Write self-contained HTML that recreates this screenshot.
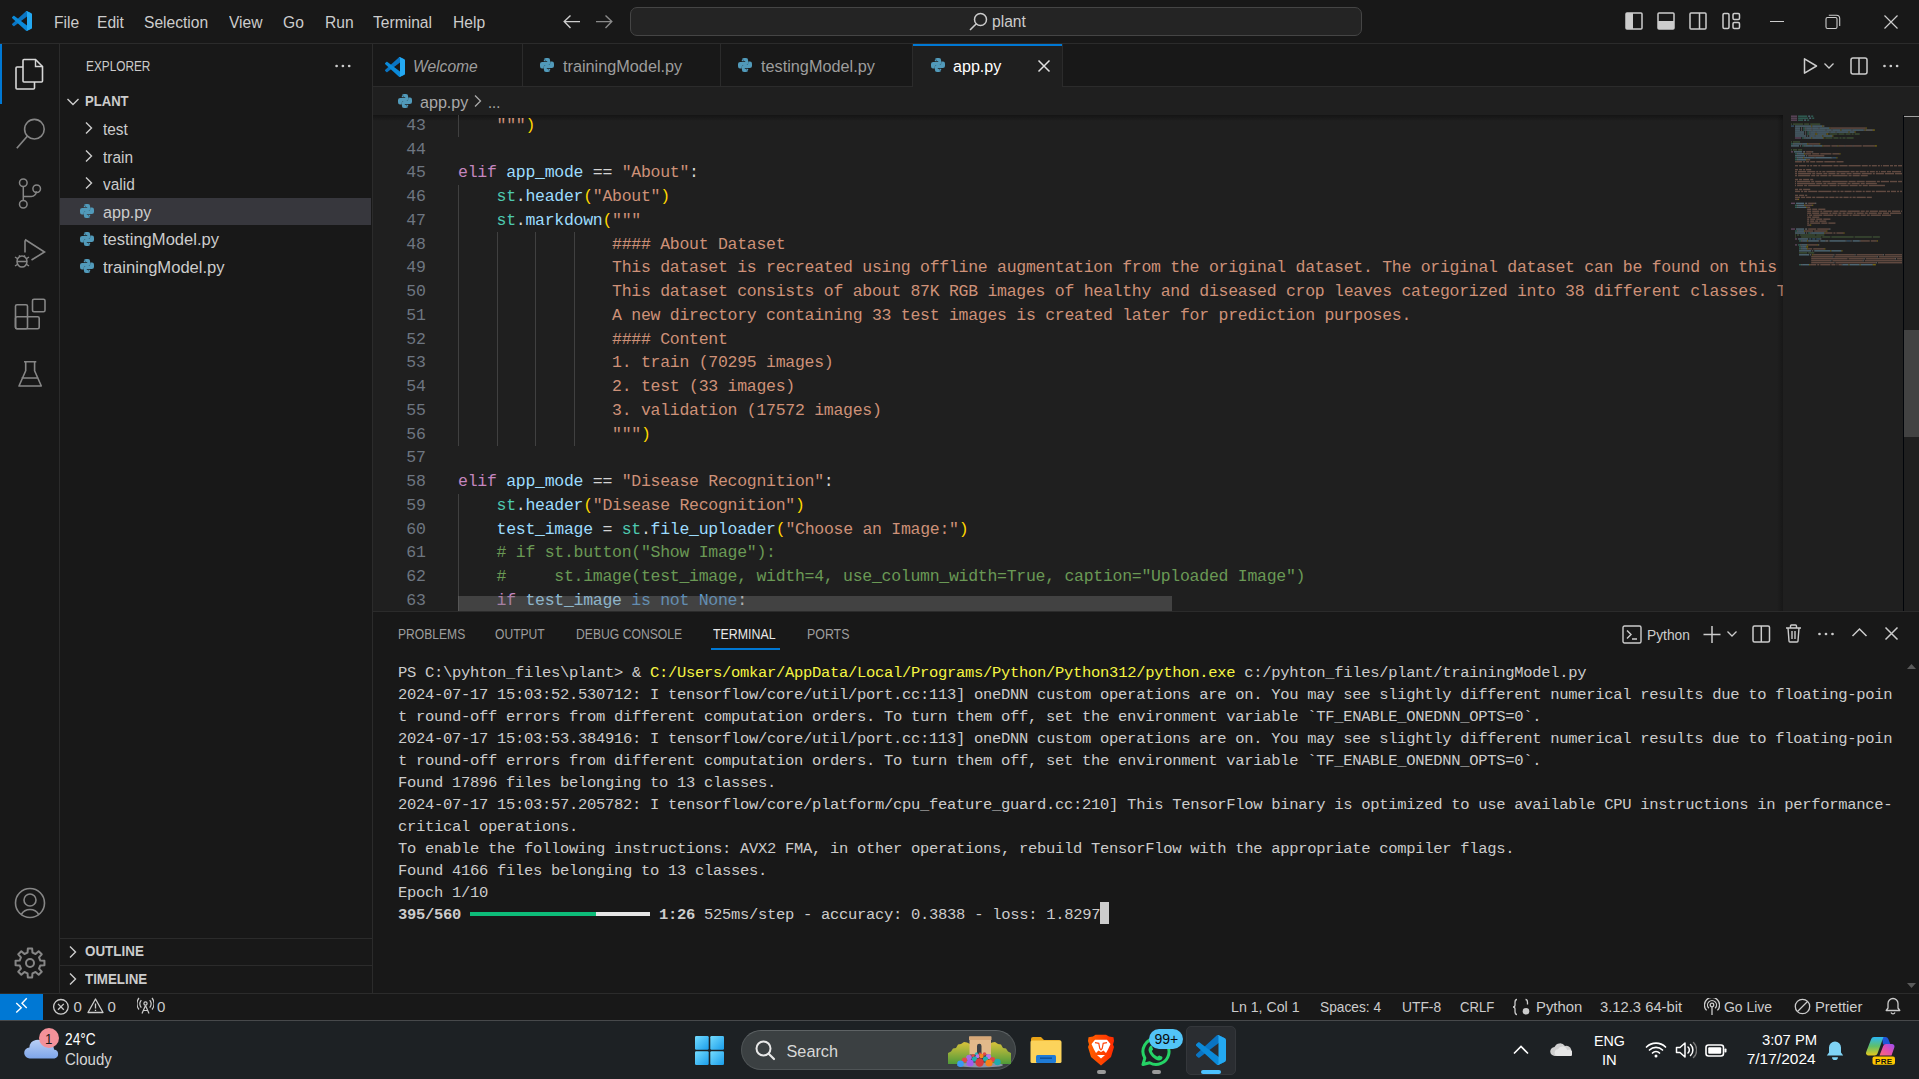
<!DOCTYPE html>
<html><head><meta charset="utf-8"><style>
html,body{margin:0;padding:0;width:1919px;height:1079px;overflow:hidden;background:#1f1f1f;}
.t{position:absolute;white-space:pre;line-height:normal;}
.r{position:absolute;display:block;}
</style></head><body>
<div class="r" style="left:0px;top:0px;width:1919px;height:43px;background:#181818;"></div><div class="r" style="left:0px;top:43px;width:1919px;height:1px;background:#2b2b2b;"></div><div class="r" style="left:0px;top:44px;width:59px;height:949px;background:#181818;"></div><div class="r" style="left:59px;top:44px;width:1px;height:949px;background:#2b2b2b;"></div><div class="r" style="left:60px;top:44px;width:312px;height:949px;background:#181818;"></div><div class="r" style="left:372px;top:44px;width:1px;height:949px;background:#2b2b2b;"></div><div class="r" style="left:373px;top:44px;width:1546px;height:43px;background:#181818;"></div><div class="r" style="left:373px;top:86px;width:1546px;height:1px;background:#2b2b2b;"></div><div class="r" style="left:373px;top:87px;width:1546px;height:524px;background:#1f1f1f;"></div><div class="r" style="left:373px;top:611px;width:1546px;height:382px;background:#181818;"></div><div class="r" style="left:373px;top:611px;width:1546px;height:1px;background:#2b2b2b;"></div><div class="r" style="left:0px;top:993px;width:1919px;height:27px;background:#181818;"></div><div class="r" style="left:0px;top:993px;width:1919px;height:1px;background:#2b2b2b;"></div><div class="r" style="left:0px;top:1020px;width:1919px;height:59px;background:#1d2124;"></div><svg class="r" style="left:12px;top:11px;" width="20" height="20" viewBox="0 0 100 100"><path fill="#0a74c2" d="M96.4614 10.7962L75.8569 0.875542C73.4719 -0.272773 70.6217 0.211611 68.75 2.08333L1.29858 63.5832C-0.515693 65.2373 -0.513607 68.0937 1.30308 69.7452L6.81272 74.754C8.29793 76.1042 10.5347 76.2036 12.1338 74.9905L93.3609 13.3699C96.0859 11.3026 100 13.2462 100 16.6667V16.4275C100 14.0265 98.6246 11.8378 96.4614 10.7962Z"/><path fill="#0b8ad9" d="M96.4614 89.2038L75.8569 99.1245C73.4719 100.273 70.6217 99.7884 68.75 97.9167L1.29858 36.4169C-0.515693 34.7627 -0.513607 31.9063 1.30308 30.2548L6.81272 25.246C8.29793 23.8958 10.5347 23.7964 12.1338 25.0095L93.3609 86.6301C96.0859 88.6974 100 86.7538 100 83.3334V83.5726C100 85.9735 98.6246 88.1622 96.4614 89.2038Z"/><path fill="#24a9f2" d="M75.8578 99.1263C73.4721 100.274 70.6219 99.7885 68.75 97.9166C71.0564 100.223 75 98.5895 75 95.3278V4.67213C75 1.41039 71.0564 -0.223106 68.75 2.08329C70.6219 0.211402 73.4721 -0.273666 75.8578 0.873633L96.4587 10.7807C98.6234 11.8217 100 14.0112 100 16.4132V83.5871C100 85.9891 98.6234 88.1786 96.4586 89.2196L75.8578 99.1263Z"/></svg><div class="t" style="left:53.60px;top:13.05px;font-size:16.25px;color:#cccccc;font-family:'Liberation Sans', sans-serif;transform:scaleX(0.96);transform-origin:0 0;">File</div><div class="t" style="left:97.00px;top:13.05px;font-size:16.25px;color:#cccccc;font-family:'Liberation Sans', sans-serif;transform:scaleX(0.96);transform-origin:0 0;">Edit</div><div class="t" style="left:144.30px;top:13.05px;font-size:16.25px;color:#cccccc;font-family:'Liberation Sans', sans-serif;transform:scaleX(0.96);transform-origin:0 0;">Selection</div><div class="t" style="left:229.40px;top:13.05px;font-size:16.25px;color:#cccccc;font-family:'Liberation Sans', sans-serif;transform:scaleX(0.96);transform-origin:0 0;">View</div><div class="t" style="left:283.30px;top:13.05px;font-size:16.25px;color:#cccccc;font-family:'Liberation Sans', sans-serif;transform:scaleX(0.96);transform-origin:0 0;">Go</div><div class="t" style="left:324.50px;top:13.05px;font-size:16.25px;color:#cccccc;font-family:'Liberation Sans', sans-serif;transform:scaleX(0.96);transform-origin:0 0;">Run</div><div class="t" style="left:373.20px;top:13.05px;font-size:16.25px;color:#cccccc;font-family:'Liberation Sans', sans-serif;transform:scaleX(0.96);transform-origin:0 0;">Terminal</div><div class="t" style="left:453.00px;top:13.05px;font-size:16.25px;color:#cccccc;font-family:'Liberation Sans', sans-serif;transform:scaleX(0.96);transform-origin:0 0;">Help</div><svg class="r" style="left:560px;top:12px;" width="24" height="20" viewBox="0 0 24 20"><path d="M4.5 9.6H20M10.5 3.5 4.2 9.6l6.3 6.3" stroke="#cccccc" stroke-width="1.4" fill="none"/></svg><svg class="r" style="left:592px;top:12px;" width="24" height="20" viewBox="0 0 24 20"><path d="M4 9.6h15.5M13.5 3.5l6.3 6.1-6.3 6.3" stroke="#8a8a8a" stroke-width="1.4" fill="none"/></svg><div class="r" style="left:630px;top:7px;width:732px;height:29px;background:#242424;box-sizing:border-box;border:1px solid #454545;border-radius:7px;"></div><svg class="r" style="left:966px;top:11px;" width="24" height="22" viewBox="0 0 24 22"><circle cx="14.5" cy="8.5" r="6" stroke="#cccccc" stroke-width="1.5" fill="none"/><path d="M10.3 12.7 4 19" stroke="#cccccc" stroke-width="1.6" fill="none"/></svg><div class="t" style="left:992.00px;top:12.35px;font-size:16.25px;color:#cccccc;font-family:'Liberation Sans', sans-serif;transform:scaleX(0.96);transform-origin:0 0;">plant</div><svg class="r" style="left:1625px;top:12px;" width="18" height="18" viewBox="0 0 18 18"><rect x="1" y="1" width="16" height="16" rx="1" stroke="#cccccc" stroke-width="1.5" fill="none"/><rect x="1" y="1" width="7" height="16" fill="#cccccc"/></svg><svg class="r" style="left:1657px;top:12px;" width="18" height="18" viewBox="0 0 18 18"><rect x="1" y="1" width="16" height="16" rx="1" stroke="#cccccc" stroke-width="1.5" fill="none"/><rect x="1" y="9" width="16" height="8" fill="#cccccc"/></svg><svg class="r" style="left:1689px;top:12px;" width="18" height="18" viewBox="0 0 18 18"><rect x="1" y="1" width="16" height="16" rx="1" stroke="#cccccc" stroke-width="1.5" fill="none"/><path d="M10.5 1v16" stroke="#cccccc" stroke-width="1.5"/></svg><svg class="r" style="left:1722px;top:12px;" width="19" height="18" viewBox="0 0 19 18"><rect x="1" y="1.5" width="6" height="15" rx="1.2" stroke="#cccccc" stroke-width="1.5" fill="none"/><rect x="11" y="1.5" width="6.5" height="6" rx="1.2" stroke="#cccccc" stroke-width="1.5" fill="none"/><rect x="11" y="10.5" width="6.5" height="6" rx="1.2" stroke="#cccccc" stroke-width="1.5" fill="none"/></svg><div class="r" style="left:1770px;top:21px;width:14px;height:1px;background:#cccccc;"></div><svg class="r" style="left:1825px;top:14px;" width="16" height="16" viewBox="0 0 16 16"><rect x="1" y="3.5" width="11" height="11" rx="1.5" stroke="#cccccc" stroke-width="1.1" fill="none"/><path d="M3.8 1.2h7.6a3.3 3.3 0 0 1 3.3 3.3v7.6" stroke="#cccccc" stroke-width="1.1" fill="none"/></svg><svg class="r" style="left:1883px;top:14px;" width="16" height="16" viewBox="0 0 16 16"><path d="M1.5 1.5l13 13M14.5 1.5l-13 13" stroke="#cccccc" stroke-width="1.2"/></svg><div class="r" style="left:0px;top:44px;width:2px;height:60px;background:#0078d4;"></div><svg class="r" style="left:0px;top:44px;" width="60" height="60" viewBox="0 0 60 60"><path d="M24 59.5h11.5l7 7v14.5a1 1 0 0 1-1 1H24a1 1 0 0 1-1-1v-20.5a1 1 0 0 1 1-1z" transform="translate(0,-44)" stroke="#d7d7d7" stroke-width="1.6" fill="none"/><path d="M35.5 59.5v7h7" transform="translate(0,-44)" stroke="#d7d7d7" stroke-width="1.4" fill="none"/><path d="M23 67H17a1 1 0 0 0-1 1v20a1 1 0 0 0 1 1h16.5a1 1 0 0 0 1-1v-6" transform="translate(0,-44)" stroke="#d7d7d7" stroke-width="1.6" fill="none"/></svg><svg class="r" style="left:0px;top:104px;" width="60" height="60" viewBox="0 0 60 60"><circle cx="34.4" cy="25.2" r="9.8" stroke="#868686" stroke-width="1.6" fill="none"/><path d="M27.3 32.3 16.8 44.2" stroke="#868686" stroke-width="1.7" fill="none"/></svg><svg class="r" style="left:0px;top:164px;" width="60" height="60" viewBox="0 0 60 60"><circle cx="23.3" cy="18.8" r="3.8" stroke="#868686" stroke-width="1.5" fill="none"/><circle cx="23.3" cy="40.2" r="3.8" stroke="#868686" stroke-width="1.5" fill="none"/><circle cx="36.7" cy="24.8" r="3.8" stroke="#868686" stroke-width="1.5" fill="none"/><path d="M23.3 22.6v13.8M23.3 32.5h8a5 5 0 0 0 5-5v-0.2" stroke="#868686" stroke-width="1.5" fill="none"/></svg><svg class="r" style="left:0px;top:224px;" width="60" height="60" viewBox="0 0 60 60"><path d="M25 16.5v12M25 15.5l19.5 12.5-13 8" stroke="#868686" stroke-width="1.6" fill="none" stroke-linejoin="miter"/><ellipse cx="22" cy="37.5" rx="5" ry="5.5" stroke="#868686" stroke-width="1.5" fill="none"/><path d="M17 37.5h10M15 33l3 2M29 33l-3 2M15 42l3-2M29 42l-3-2M19 31.5l1.5 1.5M25 31.5l-1.5 1.5" stroke="#868686" stroke-width="1.4" fill="none"/></svg><svg class="r" style="left:0px;top:284px;" width="60" height="60" viewBox="0 0 60 60"><rect x="15.5" y="20.7" width="12" height="24" rx="1.5" stroke="#868686" stroke-width="1.6" fill="none"/><rect x="15.5" y="32.7" width="23.7" height="12" rx="1.5" stroke="#868686" stroke-width="1.6" fill="none"/><rect x="32.5" y="15.2" width="12.5" height="12.5" rx="1.5" stroke="#868686" stroke-width="1.6" fill="none"/></svg><svg class="r" style="left:0px;top:344px;" width="60" height="60" viewBox="0 0 60 60"><path d="M24 17.7h12.3M25.7 17.7v9L19 42h22.3l-6.7-15.3v-9M21.5 34h17" stroke="#868686" stroke-width="1.6" fill="none" stroke-linejoin="round"/></svg><svg class="r" style="left:0px;top:873px;" width="60" height="60" viewBox="0 0 60 60"><circle cx="30" cy="30" r="14.5" stroke="#868686" stroke-width="1.6" fill="none"/><circle cx="30" cy="27" r="6" stroke="#868686" stroke-width="1.6" fill="none"/><path d="M21.3 41.5a10 10 0 0 1 17.4 0" stroke="#868686" stroke-width="1.6" fill="none"/></svg><svg class="r" style="left:0px;top:933px;" width="60" height="60" viewBox="0 0 60 60"><path d="M44.44 27.84 L44.44 32.16 L40.31 32.47 L39.04 35.54 L41.74 38.68 L38.68 41.74 L35.54 39.04 L32.47 40.31 L32.16 44.44 L27.84 44.44 L27.53 40.31 L24.46 39.04 L21.32 41.74 L18.26 38.68 L20.96 35.54 L19.69 32.47 L15.56 32.16 L15.56 27.84 L19.69 27.53 L20.96 24.46 L18.26 21.32 L21.32 18.26 L24.46 20.96 L27.53 19.69 L27.84 15.56 L32.16 15.56 L32.47 19.69 L35.54 20.96 L38.68 18.26 L41.74 21.32 L39.04 24.46 L40.31 27.53Z" stroke="#868686" stroke-width="2" fill="none" stroke-linejoin="round"/><circle cx="30" cy="30" r="4" stroke="#868686" stroke-width="2" fill="none"/></svg><div class="t" style="left:85.50px;top:59.35px;font-size:13.75px;color:#cccccc;font-family:'Liberation Sans', sans-serif;transform:scaleX(0.86);transform-origin:0 0;">EXPLORER</div><svg class="r" style="left:330px;top:60px;" width="26" height="12" viewBox="0 0 26 12"><circle cx="6.600000000000023" cy="6" r="1.35" fill="#cccccc"/><circle cx="12.899999999999977" cy="6" r="1.35" fill="#cccccc"/><circle cx="19.19999999999999" cy="6" r="1.35" fill="#cccccc"/></svg><svg class="r" style="left:66px;top:97px;" width="14" height="10" viewBox="0 0 14 10"><path d="M1.5 2 7 7.5 12.5 2" stroke="#cccccc" stroke-width="1.4" fill="none"/></svg><div class="t" style="left:85.00px;top:94.35px;font-size:13.75px;color:#cccccc;font-family:'Liberation Sans', sans-serif;font-weight:700;transform:scaleX(0.95);transform-origin:0 0;">PLANT</div><svg class="r" style="left:84px;top:121.0px;" width="10" height="14" viewBox="0 0 10 14"><path d="M2 1.5 7.5 7 2 12.5" stroke="#cccccc" stroke-width="1.4" fill="none"/></svg><div class="t" style="left:103.00px;top:120.05px;font-size:16.25px;color:#cccccc;font-family:'Liberation Sans', sans-serif;transform:scaleX(0.95);transform-origin:0 0;">test</div><svg class="r" style="left:84px;top:148.5px;" width="10" height="14" viewBox="0 0 10 14"><path d="M2 1.5 7.5 7 2 12.5" stroke="#cccccc" stroke-width="1.4" fill="none"/></svg><div class="t" style="left:103.00px;top:147.55px;font-size:16.25px;color:#cccccc;font-family:'Liberation Sans', sans-serif;transform:scaleX(0.95);transform-origin:0 0;">train</div><svg class="r" style="left:84px;top:176.0px;" width="10" height="14" viewBox="0 0 10 14"><path d="M2 1.5 7.5 7 2 12.5" stroke="#cccccc" stroke-width="1.4" fill="none"/></svg><div class="t" style="left:103.00px;top:175.05px;font-size:16.25px;color:#cccccc;font-family:'Liberation Sans', sans-serif;transform:scaleX(0.95);transform-origin:0 0;">valid</div><div class="r" style="left:60px;top:198px;width:311px;height:27px;background:#37373d;"></div><svg class="r" style="left:80px;top:204.0px;" width="14" height="14" viewBox="0 0 14 14"><path fill="#519aba" d="M3.8 2.2Q3.8 0 6 0H8Q10.1 0 10.1 2.2V5.3Q10.1 7 8.4 7H5.6Q3.8 7 3.8 8.8V10.4H2Q0 10.4 0 8.2V6Q0 3.9 2.2 3.9H7.2V3.3H3.8Z"/><path fill="#519aba" d="M3.8 2.2Q3.8 0 6 0H8Q10.1 0 10.1 2.2V5.3Q10.1 7 8.4 7H5.6Q3.8 7 3.8 8.8V10.4H2Q0 10.4 0 8.2V6Q0 3.9 2.2 3.9H7.2V3.3H3.8Z" transform="rotate(180 7 7)"/><path d="M4.6 1.3 5.6 2.6M9.4 12.7 8.4 11.4" stroke="#1a2530" stroke-width="0.9" opacity="0.7"/></svg><div class="t" style="left:103.00px;top:202.55px;font-size:16.25px;color:#cccccc;font-family:'Liberation Sans', sans-serif;transform:scaleX(0.99);transform-origin:0 0;">app.py</div><svg class="r" style="left:80px;top:231.5px;" width="14" height="14" viewBox="0 0 14 14"><path fill="#519aba" d="M3.8 2.2Q3.8 0 6 0H8Q10.1 0 10.1 2.2V5.3Q10.1 7 8.4 7H5.6Q3.8 7 3.8 8.8V10.4H2Q0 10.4 0 8.2V6Q0 3.9 2.2 3.9H7.2V3.3H3.8Z"/><path fill="#519aba" d="M3.8 2.2Q3.8 0 6 0H8Q10.1 0 10.1 2.2V5.3Q10.1 7 8.4 7H5.6Q3.8 7 3.8 8.8V10.4H2Q0 10.4 0 8.2V6Q0 3.9 2.2 3.9H7.2V3.3H3.8Z" transform="rotate(180 7 7)"/><path d="M4.6 1.3 5.6 2.6M9.4 12.7 8.4 11.4" stroke="#1a2530" stroke-width="0.9" opacity="0.7"/></svg><div class="t" style="left:103.00px;top:230.05px;font-size:16.25px;color:#cccccc;font-family:'Liberation Sans', sans-serif;transform:scaleX(1.02);transform-origin:0 0;">testingModel.py</div><svg class="r" style="left:80px;top:259.0px;" width="14" height="14" viewBox="0 0 14 14"><path fill="#519aba" d="M3.8 2.2Q3.8 0 6 0H8Q10.1 0 10.1 2.2V5.3Q10.1 7 8.4 7H5.6Q3.8 7 3.8 8.8V10.4H2Q0 10.4 0 8.2V6Q0 3.9 2.2 3.9H7.2V3.3H3.8Z"/><path fill="#519aba" d="M3.8 2.2Q3.8 0 6 0H8Q10.1 0 10.1 2.2V5.3Q10.1 7 8.4 7H5.6Q3.8 7 3.8 8.8V10.4H2Q0 10.4 0 8.2V6Q0 3.9 2.2 3.9H7.2V3.3H3.8Z" transform="rotate(180 7 7)"/><path d="M4.6 1.3 5.6 2.6M9.4 12.7 8.4 11.4" stroke="#1a2530" stroke-width="0.9" opacity="0.7"/></svg><div class="t" style="left:103.00px;top:257.55px;font-size:16.25px;color:#cccccc;font-family:'Liberation Sans', sans-serif;transform:scaleX(1.02);transform-origin:0 0;">trainingModel.py</div><div class="r" style="left:60px;top:938px;width:312px;height:1px;background:#2b2b2b;"></div><div class="r" style="left:60px;top:965px;width:312px;height:1px;background:#2b2b2b;"></div><svg class="r" style="left:68px;top:945px;" width="10" height="14" viewBox="0 0 10 14"><path d="M2 1.5 7.5 7 2 12.5" stroke="#cccccc" stroke-width="1.4" fill="none"/></svg><div class="t" style="left:85.00px;top:944.35px;font-size:13.75px;color:#cccccc;font-family:'Liberation Sans', sans-serif;font-weight:700;transform:scaleX(0.975);transform-origin:0 0;">OUTLINE</div><svg class="r" style="left:68px;top:972px;" width="10" height="14" viewBox="0 0 10 14"><path d="M2 1.5 7.5 7 2 12.5" stroke="#cccccc" stroke-width="1.4" fill="none"/></svg><div class="t" style="left:85.00px;top:972.35px;font-size:13.75px;color:#cccccc;font-family:'Liberation Sans', sans-serif;font-weight:700;transform:scaleX(0.97);transform-origin:0 0;">TIMELINE</div><div class="r" style="left:522px;top:44px;width:1px;height:43px;background:#2b2b2b;"></div><div class="r" style="left:720px;top:44px;width:1px;height:43px;background:#2b2b2b;"></div><div class="r" style="left:912px;top:44px;width:1px;height:43px;background:#2b2b2b;"></div><div class="r" style="left:1062px;top:44px;width:1px;height:43px;background:#2b2b2b;"></div><div class="r" style="left:913px;top:44px;width:149px;height:43px;background:#1f1f1f;"></div><div class="r" style="left:913px;top:44px;width:149px;height:1.5px;background:#0078d4;"></div><svg class="r" style="left:385px;top:57px;" width="20" height="20" viewBox="0 0 100 100"><path fill="#0a74c2" d="M96.4614 10.7962L75.8569 0.875542C73.4719 -0.272773 70.6217 0.211611 68.75 2.08333L1.29858 63.5832C-0.515693 65.2373 -0.513607 68.0937 1.30308 69.7452L6.81272 74.754C8.29793 76.1042 10.5347 76.2036 12.1338 74.9905L93.3609 13.3699C96.0859 11.3026 100 13.2462 100 16.6667V16.4275C100 14.0265 98.6246 11.8378 96.4614 10.7962Z"/><path fill="#0b8ad9" d="M96.4614 89.2038L75.8569 99.1245C73.4719 100.273 70.6217 99.7884 68.75 97.9167L1.29858 36.4169C-0.515693 34.7627 -0.513607 31.9063 1.30308 30.2548L6.81272 25.246C8.29793 23.8958 10.5347 23.7964 12.1338 25.0095L93.3609 86.6301C96.0859 88.6974 100 86.7538 100 83.3334V83.5726C100 85.9735 98.6246 88.1622 96.4614 89.2038Z"/><path fill="#24a9f2" d="M75.8578 99.1263C73.4721 100.274 70.6219 99.7885 68.75 97.9166C71.0564 100.223 75 98.5895 75 95.3278V4.67213C75 1.41039 71.0564 -0.223106 68.75 2.08329C70.6219 0.211402 73.4721 -0.273666 75.8578 0.873633L96.4587 10.7807C98.6234 11.8217 100 14.0112 100 16.4132V83.5871C100 85.9891 98.6234 88.1786 96.4586 89.2196L75.8578 99.1263Z"/></svg><div class="t" style="left:413.00px;top:57.05px;font-size:16.25px;color:#9d9d9d;font-family:'Liberation Sans', sans-serif;font-style:italic;transform:scaleX(0.96);transform-origin:0 0;">Welcome</div><svg class="r" style="left:540px;top:58px;" width="14" height="14" viewBox="0 0 14 14"><path fill="#519aba" d="M3.8 2.2Q3.8 0 6 0H8Q10.1 0 10.1 2.2V5.3Q10.1 7 8.4 7H5.6Q3.8 7 3.8 8.8V10.4H2Q0 10.4 0 8.2V6Q0 3.9 2.2 3.9H7.2V3.3H3.8Z"/><path fill="#519aba" d="M3.8 2.2Q3.8 0 6 0H8Q10.1 0 10.1 2.2V5.3Q10.1 7 8.4 7H5.6Q3.8 7 3.8 8.8V10.4H2Q0 10.4 0 8.2V6Q0 3.9 2.2 3.9H7.2V3.3H3.8Z" transform="rotate(180 7 7)"/><path d="M4.6 1.3 5.6 2.6M9.4 12.7 8.4 11.4" stroke="#1a2530" stroke-width="0.9" opacity="0.7"/></svg><div class="t" style="left:563.00px;top:57.05px;font-size:16.25px;color:#9d9d9d;font-family:'Liberation Sans', sans-serif;">trainingModel.py</div><svg class="r" style="left:738px;top:58px;" width="14" height="14" viewBox="0 0 14 14"><path fill="#519aba" d="M3.8 2.2Q3.8 0 6 0H8Q10.1 0 10.1 2.2V5.3Q10.1 7 8.4 7H5.6Q3.8 7 3.8 8.8V10.4H2Q0 10.4 0 8.2V6Q0 3.9 2.2 3.9H7.2V3.3H3.8Z"/><path fill="#519aba" d="M3.8 2.2Q3.8 0 6 0H8Q10.1 0 10.1 2.2V5.3Q10.1 7 8.4 7H5.6Q3.8 7 3.8 8.8V10.4H2Q0 10.4 0 8.2V6Q0 3.9 2.2 3.9H7.2V3.3H3.8Z" transform="rotate(180 7 7)"/><path d="M4.6 1.3 5.6 2.6M9.4 12.7 8.4 11.4" stroke="#1a2530" stroke-width="0.9" opacity="0.7"/></svg><div class="t" style="left:761.00px;top:57.05px;font-size:16.25px;color:#9d9d9d;font-family:'Liberation Sans', sans-serif;">testingModel.py</div><svg class="r" style="left:930.5px;top:58px;" width="14" height="14" viewBox="0 0 14 14"><path fill="#519aba" d="M3.8 2.2Q3.8 0 6 0H8Q10.1 0 10.1 2.2V5.3Q10.1 7 8.4 7H5.6Q3.8 7 3.8 8.8V10.4H2Q0 10.4 0 8.2V6Q0 3.9 2.2 3.9H7.2V3.3H3.8Z"/><path fill="#519aba" d="M3.8 2.2Q3.8 0 6 0H8Q10.1 0 10.1 2.2V5.3Q10.1 7 8.4 7H5.6Q3.8 7 3.8 8.8V10.4H2Q0 10.4 0 8.2V6Q0 3.9 2.2 3.9H7.2V3.3H3.8Z" transform="rotate(180 7 7)"/><path d="M4.6 1.3 5.6 2.6M9.4 12.7 8.4 11.4" stroke="#1a2530" stroke-width="0.9" opacity="0.7"/></svg><div class="t" style="left:953.00px;top:57.05px;font-size:16.25px;color:#ffffff;font-family:'Liberation Sans', sans-serif;transform:scaleX(0.99);transform-origin:0 0;">app.py</div><svg class="r" style="left:1037px;top:59px;" width="14" height="14" viewBox="0 0 14 14"><path d="M1.5 1.5l11 11M12.5 1.5l-11 11" stroke="#e0e0e0" stroke-width="1.5"/></svg><svg class="r" style="left:1801.5px;top:57px;" width="18" height="18" viewBox="0 0 18 18"><path d="M2.5 1.8 14.5 9 2.5 16.2Z" stroke="#cccccc" stroke-width="1.5" fill="none" stroke-linejoin="round"/></svg><svg class="r" style="left:1823px;top:62px;" width="12" height="8" viewBox="0 0 12 8"><path d="M1.5 1.5 6 6 10.5 1.5" stroke="#cccccc" stroke-width="1.3" fill="none"/></svg><svg class="r" style="left:1850px;top:57px;" width="18" height="18" viewBox="0 0 18 18"><rect x="1" y="1" width="16" height="16" rx="2" stroke="#cccccc" stroke-width="1.5" fill="none"/><path d="M9 1v16" stroke="#cccccc" stroke-width="1.5"/></svg><svg class="r" style="left:1878px;top:60px;" width="26" height="12" viewBox="0 0 26 12"><circle cx="6.5" cy="6" r="1.35" fill="#cccccc"/><circle cx="12.799999999999955" cy="6" r="1.35" fill="#cccccc"/><circle cx="19.09999999999991" cy="6" r="1.35" fill="#cccccc"/></svg><svg class="r" style="left:397.5px;top:94px;" width="14" height="14" viewBox="0 0 14 14"><path fill="#519aba" d="M3.8 2.2Q3.8 0 6 0H8Q10.1 0 10.1 2.2V5.3Q10.1 7 8.4 7H5.6Q3.8 7 3.8 8.8V10.4H2Q0 10.4 0 8.2V6Q0 3.9 2.2 3.9H7.2V3.3H3.8Z"/><path fill="#519aba" d="M3.8 2.2Q3.8 0 6 0H8Q10.1 0 10.1 2.2V5.3Q10.1 7 8.4 7H5.6Q3.8 7 3.8 8.8V10.4H2Q0 10.4 0 8.2V6Q0 3.9 2.2 3.9H7.2V3.3H3.8Z" transform="rotate(180 7 7)"/><path d="M4.6 1.3 5.6 2.6M9.4 12.7 8.4 11.4" stroke="#1a2530" stroke-width="0.9" opacity="0.7"/></svg><div class="t" style="left:420.00px;top:92.55px;font-size:16.25px;color:#a9a9a9;font-family:'Liberation Sans', sans-serif;transform:scaleX(0.99);transform-origin:0 0;">app.py</div><svg class="r" style="left:473px;top:94px;" width="10" height="14" viewBox="0 0 10 14"><path d="M2 1.5 7.5 7 2 12.5" stroke="#a9a9a9" stroke-width="1.3" fill="none"/></svg><div class="t" style="left:488.00px;top:92.55px;font-size:16.25px;color:#a9a9a9;font-family:'Liberation Sans', sans-serif;transform:scaleX(0.9);transform-origin:0 0;">...</div><div class="r" style="left:373px;top:115px;width:1410px;height:6px;background:linear-gradient(#0000005c, #00000000);"></div><div style="position:absolute;left:373px;top:115px;width:1410px;height:496px;overflow:hidden"><div style="position:absolute;left:-373px;top:-115px;width:1919px;height:1079px"><div class="t" style="left:458.00px;top:92.16px;font-size:16.5px;font-family:'Liberation Mono', monospace;letter-spacing:-0.27500000000000036px;"><span style="color:#d4d4d4">    </span><span style="color:#ce9178">&quot;&quot;&quot;</span><span style="color:#ffd700">)</span></div><div class="t" style="left:406.25px;top:115.91px;font-size:16.5px;color:#6e7681;font-family:'Liberation Mono', monospace;letter-spacing:-0.27500000000000036px;">43</div><div class="t" style="left:458.00px;top:115.91px;font-size:16.5px;font-family:'Liberation Mono', monospace;letter-spacing:-0.27500000000000036px;"><span style="color:#d4d4d4">    </span><span style="color:#ce9178">&quot;&quot;&quot;</span><span style="color:#ffd700">)</span></div><div class="t" style="left:406.25px;top:139.66px;font-size:16.5px;color:#6e7681;font-family:'Liberation Mono', monospace;letter-spacing:-0.27500000000000036px;">44</div><div class="t" style="left:406.25px;top:163.41px;font-size:16.5px;color:#6e7681;font-family:'Liberation Mono', monospace;letter-spacing:-0.27500000000000036px;">45</div><div class="t" style="left:458.00px;top:163.41px;font-size:16.5px;font-family:'Liberation Mono', monospace;letter-spacing:-0.27500000000000036px;"><span style="color:#c586c0">elif</span><span style="color:#d4d4d4"> </span><span style="color:#9cdcfe">app_mode</span><span style="color:#d4d4d4"> == </span><span style="color:#ce9178">&quot;About&quot;</span><span style="color:#d4d4d4">:</span></div><div class="t" style="left:406.25px;top:187.16px;font-size:16.5px;color:#6e7681;font-family:'Liberation Mono', monospace;letter-spacing:-0.27500000000000036px;">46</div><div class="t" style="left:458.00px;top:187.16px;font-size:16.5px;font-family:'Liberation Mono', monospace;letter-spacing:-0.27500000000000036px;"><span style="color:#d4d4d4">    </span><span style="color:#4ec9b0">st</span><span style="color:#d4d4d4">.</span><span style="color:#9cdcfe">header</span><span style="color:#ffd700">(</span><span style="color:#ce9178">&quot;About&quot;</span><span style="color:#ffd700">)</span></div><div class="t" style="left:406.25px;top:210.91px;font-size:16.5px;color:#6e7681;font-family:'Liberation Mono', monospace;letter-spacing:-0.27500000000000036px;">47</div><div class="t" style="left:458.00px;top:210.91px;font-size:16.5px;font-family:'Liberation Mono', monospace;letter-spacing:-0.27500000000000036px;"><span style="color:#d4d4d4">    </span><span style="color:#4ec9b0">st</span><span style="color:#d4d4d4">.</span><span style="color:#9cdcfe">markdown</span><span style="color:#ffd700">(</span><span style="color:#ce9178">&quot;&quot;&quot;</span></div><div class="t" style="left:406.25px;top:234.66px;font-size:16.5px;color:#6e7681;font-family:'Liberation Mono', monospace;letter-spacing:-0.27500000000000036px;">48</div><div class="t" style="left:458.00px;top:234.66px;font-size:16.5px;font-family:'Liberation Mono', monospace;letter-spacing:-0.27500000000000036px;"><span style="color:#ce9178">                #### About Dataset</span></div><div class="t" style="left:406.25px;top:258.41px;font-size:16.5px;color:#6e7681;font-family:'Liberation Mono', monospace;letter-spacing:-0.27500000000000036px;">49</div><div class="t" style="left:458.00px;top:258.41px;font-size:16.5px;font-family:'Liberation Mono', monospace;letter-spacing:-0.27500000000000036px;"><span style="color:#ce9178">                This dataset is recreated using offline augmentation from the original dataset. The original dataset can be found on this github repo.</span></div><div class="t" style="left:406.25px;top:282.16px;font-size:16.5px;color:#6e7681;font-family:'Liberation Mono', monospace;letter-spacing:-0.27500000000000036px;">50</div><div class="t" style="left:458.00px;top:282.16px;font-size:16.5px;font-family:'Liberation Mono', monospace;letter-spacing:-0.27500000000000036px;"><span style="color:#ce9178">                This dataset consists of about 87K RGB images of healthy and diseased crop leaves categorized into 38 different classes. The total dataset is divided into 80/20 ratio</span></div><div class="t" style="left:406.25px;top:305.91px;font-size:16.5px;color:#6e7681;font-family:'Liberation Mono', monospace;letter-spacing:-0.27500000000000036px;">51</div><div class="t" style="left:458.00px;top:305.91px;font-size:16.5px;font-family:'Liberation Mono', monospace;letter-spacing:-0.27500000000000036px;"><span style="color:#ce9178">                A new directory containing 33 test images is created later for prediction purposes.</span></div><div class="t" style="left:406.25px;top:329.66px;font-size:16.5px;color:#6e7681;font-family:'Liberation Mono', monospace;letter-spacing:-0.27500000000000036px;">52</div><div class="t" style="left:458.00px;top:329.66px;font-size:16.5px;font-family:'Liberation Mono', monospace;letter-spacing:-0.27500000000000036px;"><span style="color:#ce9178">                #### Content</span></div><div class="t" style="left:406.25px;top:353.41px;font-size:16.5px;color:#6e7681;font-family:'Liberation Mono', monospace;letter-spacing:-0.27500000000000036px;">53</div><div class="t" style="left:458.00px;top:353.41px;font-size:16.5px;font-family:'Liberation Mono', monospace;letter-spacing:-0.27500000000000036px;"><span style="color:#ce9178">                1. train (70295 images)</span></div><div class="t" style="left:406.25px;top:377.16px;font-size:16.5px;color:#6e7681;font-family:'Liberation Mono', monospace;letter-spacing:-0.27500000000000036px;">54</div><div class="t" style="left:458.00px;top:377.16px;font-size:16.5px;font-family:'Liberation Mono', monospace;letter-spacing:-0.27500000000000036px;"><span style="color:#ce9178">                2. test (33 images)</span></div><div class="t" style="left:406.25px;top:400.91px;font-size:16.5px;color:#6e7681;font-family:'Liberation Mono', monospace;letter-spacing:-0.27500000000000036px;">55</div><div class="t" style="left:458.00px;top:400.91px;font-size:16.5px;font-family:'Liberation Mono', monospace;letter-spacing:-0.27500000000000036px;"><span style="color:#ce9178">                3. validation (17572 images)</span></div><div class="t" style="left:406.25px;top:424.66px;font-size:16.5px;color:#6e7681;font-family:'Liberation Mono', monospace;letter-spacing:-0.27500000000000036px;">56</div><div class="t" style="left:458.00px;top:424.66px;font-size:16.5px;font-family:'Liberation Mono', monospace;letter-spacing:-0.27500000000000036px;"><span style="color:#ce9178">                &quot;&quot;&quot;</span><span style="color:#ffd700">)</span></div><div class="t" style="left:406.25px;top:448.41px;font-size:16.5px;color:#6e7681;font-family:'Liberation Mono', monospace;letter-spacing:-0.27500000000000036px;">57</div><div class="t" style="left:406.25px;top:472.16px;font-size:16.5px;color:#6e7681;font-family:'Liberation Mono', monospace;letter-spacing:-0.27500000000000036px;">58</div><div class="t" style="left:458.00px;top:472.16px;font-size:16.5px;font-family:'Liberation Mono', monospace;letter-spacing:-0.27500000000000036px;"><span style="color:#c586c0">elif</span><span style="color:#d4d4d4"> </span><span style="color:#9cdcfe">app_mode</span><span style="color:#d4d4d4"> == </span><span style="color:#ce9178">&quot;Disease Recognition&quot;</span><span style="color:#d4d4d4">:</span></div><div class="t" style="left:406.25px;top:495.91px;font-size:16.5px;color:#6e7681;font-family:'Liberation Mono', monospace;letter-spacing:-0.27500000000000036px;">59</div><div class="t" style="left:458.00px;top:495.91px;font-size:16.5px;font-family:'Liberation Mono', monospace;letter-spacing:-0.27500000000000036px;"><span style="color:#d4d4d4">    </span><span style="color:#4ec9b0">st</span><span style="color:#d4d4d4">.</span><span style="color:#9cdcfe">header</span><span style="color:#ffd700">(</span><span style="color:#ce9178">&quot;Disease Recognition&quot;</span><span style="color:#ffd700">)</span></div><div class="t" style="left:406.25px;top:519.65px;font-size:16.5px;color:#6e7681;font-family:'Liberation Mono', monospace;letter-spacing:-0.27500000000000036px;">60</div><div class="t" style="left:458.00px;top:519.65px;font-size:16.5px;font-family:'Liberation Mono', monospace;letter-spacing:-0.27500000000000036px;"><span style="color:#d4d4d4">    </span><span style="color:#9cdcfe">test_image</span><span style="color:#d4d4d4"> = </span><span style="color:#4ec9b0">st</span><span style="color:#d4d4d4">.</span><span style="color:#9cdcfe">file_uploader</span><span style="color:#ffd700">(</span><span style="color:#ce9178">&quot;Choose an Image:&quot;</span><span style="color:#ffd700">)</span></div><div class="t" style="left:406.25px;top:543.40px;font-size:16.5px;color:#6e7681;font-family:'Liberation Mono', monospace;letter-spacing:-0.27500000000000036px;">61</div><div class="t" style="left:458.00px;top:543.40px;font-size:16.5px;font-family:'Liberation Mono', monospace;letter-spacing:-0.27500000000000036px;"><span style="color:#6a9955">    # if st.button(&quot;Show Image&quot;):</span></div><div class="t" style="left:406.25px;top:567.15px;font-size:16.5px;color:#6e7681;font-family:'Liberation Mono', monospace;letter-spacing:-0.27500000000000036px;">62</div><div class="t" style="left:458.00px;top:567.15px;font-size:16.5px;font-family:'Liberation Mono', monospace;letter-spacing:-0.27500000000000036px;"><span style="color:#6a9955">    #     st.image(test_image, width=4, use_column_width=True, caption=&quot;Uploaded Image&quot;)</span></div><div class="t" style="left:406.25px;top:590.90px;font-size:16.5px;color:#6e7681;font-family:'Liberation Mono', monospace;letter-spacing:-0.27500000000000036px;">63</div><div class="t" style="left:458.00px;top:590.90px;font-size:16.5px;font-family:'Liberation Mono', monospace;letter-spacing:-0.27500000000000036px;"><span style="color:#d4d4d4">    </span><span style="color:#c586c0">if</span><span style="color:#d4d4d4"> </span><span style="color:#9cdcfe">test_image</span><span style="color:#d4d4d4"> </span><span style="color:#569cd6">is not None</span><span style="color:#d4d4d4">:</span></div><div class="t" style="left:458.00px;top:614.65px;font-size:16.5px;font-family:'Liberation Mono', monospace;letter-spacing:-0.27500000000000036px;"><span style="color:#d4d4d4">        </span><span style="color:#4ec9b0">st</span><span style="color:#d4d4d4">.</span><span style="color:#9cdcfe">image</span><span style="color:#ffd700">(</span><span style="color:#9cdcfe">test_image</span><span style="color:#d4d4d4">, </span><span style="color:#9cdcfe">width</span><span style="color:#d4d4d4">=</span><span style="color:#d4d4d4">4</span><span style="color:#d4d4d4">, </span><span style="color:#9cdcfe">use_column_width</span><span style="color:#d4d4d4">=</span><span style="color:#569cd6">True</span><span style="color:#ffd700">)</span></div><div class="r" style="left:458.0px;top:89.85px;width:1px;height:47.5px;background:#404040;"></div><div class="r" style="left:458.0px;top:184.85px;width:1px;height:261.25px;background:#404040;"></div><div class="r" style="left:496.5px;top:232.35px;width:1px;height:213.75000000000003px;background:#404040;"></div><div class="r" style="left:535.0px;top:232.35px;width:1px;height:213.75000000000003px;background:#404040;"></div><div class="r" style="left:573.5px;top:232.35px;width:1px;height:213.75000000000003px;background:#404040;"></div><div class="r" style="left:458.0px;top:493.6px;width:1px;height:142.5px;background:#404040;"></div></div></div><div class="r" style="left:458px;top:596px;width:714px;height:15px;background:rgba(121,121,121,0.4);"></div><div class="r" style="left:1777px;top:115px;width:6px;height:496px;background:linear-gradient(90deg,#00000000,#00000040);"></div><div class="r" style="left:1903px;top:330px;width:16px;height:107px;background:rgba(121,121,121,0.4);"></div><div class="t" style="left:397.50px;top:626.75px;font-size:13.75px;color:#9d9d9d;font-family:'Liberation Sans', sans-serif;transform:scaleX(0.88);transform-origin:0 0;">PROBLEMS</div><div class="t" style="left:494.50px;top:626.75px;font-size:13.75px;color:#9d9d9d;font-family:'Liberation Sans', sans-serif;transform:scaleX(0.88);transform-origin:0 0;">OUTPUT</div><div class="t" style="left:575.90px;top:626.75px;font-size:13.75px;color:#9d9d9d;font-family:'Liberation Sans', sans-serif;transform:scaleX(0.885);transform-origin:0 0;">DEBUG CONSOLE</div><div class="t" style="left:712.90px;top:626.75px;font-size:13.75px;color:#e7e7e7;font-family:'Liberation Sans', sans-serif;transform:scaleX(0.9);transform-origin:0 0;">TERMINAL</div><div class="t" style="left:806.70px;top:626.75px;font-size:13.75px;color:#9d9d9d;font-family:'Liberation Sans', sans-serif;transform:scaleX(0.9);transform-origin:0 0;">PORTS</div><div class="r" style="left:711px;top:648px;width:69px;height:1.5px;background:#0078d4;"></div><svg class="r" style="left:1622px;top:625px;" width="20" height="19" viewBox="0 0 20 19"><rect x="1" y="1" width="18" height="17" rx="1.5" stroke="#cccccc" stroke-width="1.4" fill="none"/><path d="M5 5.5 9 9.5 5 13.5M10 14h5" stroke="#cccccc" stroke-width="1.4" fill="none"/></svg><div class="t" style="left:1647.00px;top:626.04px;font-size:15.5px;color:#cccccc;font-family:'Liberation Sans', sans-serif;transform:scaleX(0.89);transform-origin:0 0;">Python</div><svg class="r" style="left:1702px;top:625px;" width="20" height="19" viewBox="0 0 20 19"><path d="M10 1v17M1.5 9.5h17" stroke="#cccccc" stroke-width="1.5"/></svg><svg class="r" style="left:1726px;top:630px;" width="12" height="8" viewBox="0 0 12 8"><path d="M1.5 1.5 6 6 10.5 1.5" stroke="#cccccc" stroke-width="1.3" fill="none"/></svg><svg class="r" style="left:1752px;top:625px;" width="19" height="18" viewBox="0 0 19 18"><rect x="1" y="1" width="16.5" height="16" rx="1.5" stroke="#cccccc" stroke-width="1.5" fill="none"/><path d="M9.3 1v16" stroke="#cccccc" stroke-width="1.5"/></svg><svg class="r" style="left:1785px;top:624px;" width="17" height="19" viewBox="0 0 17 19"><path d="M1 4h15M5.5 4V2a1 1 0 0 1 1-1h4a1 1 0 0 1 1 1v2M3 4l1 13a1 1 0 0 0 1 1h7a1 1 0 0 0 1-1l1-13M7 7v8M10 7v8" stroke="#cccccc" stroke-width="1.4" fill="none"/></svg><svg class="r" style="left:1812px;top:628px;" width="26" height="12" viewBox="0 0 26 12"><circle cx="7.5" cy="6" r="1.35" fill="#cccccc"/><circle cx="14" cy="6" r="1.35" fill="#cccccc"/><circle cx="20.5" cy="6" r="1.35" fill="#cccccc"/></svg><svg class="r" style="left:1851px;top:627px;" width="17" height="11" viewBox="0 0 17 11"><path d="M1.5 9 8.5 2 15.5 9" stroke="#cccccc" stroke-width="1.5" fill="none"/></svg><svg class="r" style="left:1884px;top:626px;" width="15" height="15" viewBox="0 0 15 15"><path d="M1.5 1.5l12 12M13.5 1.5l-12 12" stroke="#cccccc" stroke-width="1.5"/></svg><div class="t" style="left:398.00px;top:664.13px;font-size:15.5px;font-family:'Liberation Mono', monospace;letter-spacing:-0.29999999999999893px;"><span style="color:#cccccc">PS C:\pyhton_files\plant&gt; &amp; </span><span style="color:#f5f543">C:/Users/omkar/AppData/Local/Programs/Python/Python312/python.exe</span><span style="color:#cccccc"> c:/pyhton_files/plant/trainingModel.py</span></div><div class="t" style="left:398.00px;top:686.13px;font-size:15.5px;font-family:'Liberation Mono', monospace;letter-spacing:-0.29999999999999893px;"><span style="color:#cccccc">2024-07-17 15:03:52.530712: I tensorflow/core/util/port.cc:113] oneDNN custom operations are on. You may see slightly different numerical results due to floating-poin</span></div><div class="t" style="left:398.00px;top:708.13px;font-size:15.5px;font-family:'Liberation Mono', monospace;letter-spacing:-0.29999999999999893px;"><span style="color:#cccccc">t round-off errors from different computation orders. To turn them off, set the environment variable `TF_ENABLE_ONEDNN_OPTS=0`.</span></div><div class="t" style="left:398.00px;top:730.13px;font-size:15.5px;font-family:'Liberation Mono', monospace;letter-spacing:-0.29999999999999893px;"><span style="color:#cccccc">2024-07-17 15:03:53.384916: I tensorflow/core/util/port.cc:113] oneDNN custom operations are on. You may see slightly different numerical results due to floating-poin</span></div><div class="t" style="left:398.00px;top:752.13px;font-size:15.5px;font-family:'Liberation Mono', monospace;letter-spacing:-0.29999999999999893px;"><span style="color:#cccccc">t round-off errors from different computation orders. To turn them off, set the environment variable `TF_ENABLE_ONEDNN_OPTS=0`.</span></div><div class="t" style="left:398.00px;top:774.13px;font-size:15.5px;font-family:'Liberation Mono', monospace;letter-spacing:-0.29999999999999893px;"><span style="color:#cccccc">Found 17896 files belonging to 13 classes.</span></div><div class="t" style="left:398.00px;top:796.13px;font-size:15.5px;font-family:'Liberation Mono', monospace;letter-spacing:-0.29999999999999893px;"><span style="color:#cccccc">2024-07-17 15:03:57.205782: I tensorflow/core/platform/cpu_feature_guard.cc:210] This TensorFlow binary is optimized to use available CPU instructions in performance-</span></div><div class="t" style="left:398.00px;top:818.13px;font-size:15.5px;font-family:'Liberation Mono', monospace;letter-spacing:-0.29999999999999893px;"><span style="color:#cccccc">critical operations.</span></div><div class="t" style="left:398.00px;top:840.13px;font-size:15.5px;font-family:'Liberation Mono', monospace;letter-spacing:-0.29999999999999893px;"><span style="color:#cccccc">To enable the following instructions: AVX2 FMA, in other operations, rebuild TensorFlow with the appropriate compiler flags.</span></div><div class="t" style="left:398.00px;top:862.13px;font-size:15.5px;font-family:'Liberation Mono', monospace;letter-spacing:-0.29999999999999893px;"><span style="color:#cccccc">Found 4166 files belonging to 13 classes.</span></div><div class="t" style="left:398.00px;top:884.13px;font-size:15.5px;font-family:'Liberation Mono', monospace;letter-spacing:-0.29999999999999893px;"><span style="color:#cccccc">Epoch 1/10</span></div><div class="t" style="left:398.00px;top:906.13px;font-size:15.5px;font-family:'Liberation Mono', monospace;letter-spacing:-0.29999999999999893px;"><span style="color:#cccccc;font-weight:700">395/560</span><span style="color:#cccccc">                      </span><span style="color:#cccccc;font-weight:700">1:26</span><span style="color:#cccccc"> 525ms/step - accuracy: 0.3838 - loss: 1.8297</span></div><div class="r" style="left:470px;top:912px;width:126px;height:4px;background:#0dbc79;"></div><div class="r" style="left:596px;top:912px;width:54px;height:4px;background:#e5e5e5;"></div><div class="r" style="left:1100px;top:902px;width:9px;height:21.75px;background:#cccccc;"></div><svg class="r" style="left:1906px;top:662px;" width="11" height="8" viewBox="0 0 11 8"><path d="M1 7 5.5 2 10 7Z" fill="#5a5a5a"/></svg><svg class="r" style="left:1906px;top:982px;" width="11" height="8" viewBox="0 0 11 8"><path d="M1 1 5.5 6 10 1Z" fill="#5a5a5a"/></svg><div class="r" style="left:0px;top:994px;width:43px;height:26px;background:#0078d4;"></div><svg class="r" style="left:0px;top:993px;" width="43" height="27" viewBox="0 0 43 27"><path d="M16.25 10 21.25 14.75 16.25 19.5M26.75 5.25 22 10.25l4.75 4.75" stroke="#ffffff" stroke-width="1.4" fill="none"/></svg><svg class="r" style="left:52px;top:998px;" width="18" height="18" viewBox="0 0 18 18"><circle cx="8.9" cy="8.8" r="7.3" stroke="#cccccc" stroke-width="1.3" fill="none"/><path d="M6 5.9l5.8 5.8M11.8 5.9 6 11.7" stroke="#cccccc" stroke-width="1.3"/></svg><div class="t" style="left:73.50px;top:997.90px;font-size:15.0px;color:#cccccc;font-family:'Liberation Sans', sans-serif;">0</div><svg class="r" style="left:87px;top:997px;" width="17" height="18" viewBox="0 0 17 18"><path d="M8.5 2 16 15.5H1Z" stroke="#cccccc" stroke-width="1.3" fill="none" stroke-linejoin="round"/><path d="M8.5 6.5v5M8.5 12.8v1.3" stroke="#cccccc" stroke-width="1.3"/></svg><div class="t" style="left:107.50px;top:997.90px;font-size:15.0px;color:#cccccc;font-family:'Liberation Sans', sans-serif;">0</div><svg class="r" style="left:137px;top:997px;" width="17" height="18" viewBox="0 0 17 18"><circle cx="8.5" cy="6.5" r="1.6" stroke="#cccccc" stroke-width="1.2" fill="none"/><path d="M8.5 8.5 5 16.5M8.5 8.5l3.5 8M6.2 13.5h4.6M4.3 3a6 6 0 0 0 0 7.5M12.7 3a6 6 0 0 1 0 7.5M2 1a9 9 0 0 0 0 11.5M15 1a9 9 0 0 1 0 11.5" stroke="#cccccc" stroke-width="1.2" fill="none"/></svg><div class="t" style="left:157.00px;top:997.90px;font-size:15.0px;color:#cccccc;font-family:'Liberation Sans', sans-serif;">0</div><div class="t" style="left:1231.00px;top:997.90px;font-size:15.0px;color:#cccccc;font-family:'Liberation Sans', sans-serif;transform:scaleX(0.945);transform-origin:0 0;">Ln 1, Col 1</div><div class="t" style="left:1319.80px;top:997.90px;font-size:15.0px;color:#cccccc;font-family:'Liberation Sans', sans-serif;transform:scaleX(0.915);transform-origin:0 0;">Spaces: 4</div><div class="t" style="left:1401.50px;top:997.90px;font-size:15.0px;color:#cccccc;font-family:'Liberation Sans', sans-serif;transform:scaleX(0.92);transform-origin:0 0;">UTF-8</div><div class="t" style="left:1460.20px;top:997.90px;font-size:15.0px;color:#cccccc;font-family:'Liberation Sans', sans-serif;transform:scaleX(0.875);transform-origin:0 0;">CRLF</div><div class="t" style="left:1535.70px;top:997.90px;font-size:15.0px;color:#cccccc;font-family:'Liberation Sans', sans-serif;transform:scaleX(0.99);transform-origin:0 0;">Python</div><div class="t" style="left:1600.20px;top:997.90px;font-size:15.0px;color:#cccccc;font-family:'Liberation Sans', sans-serif;transform:scaleX(0.985);transform-origin:0 0;">3.12.3 64-bit</div><div class="t" style="left:1723.70px;top:997.90px;font-size:15.0px;color:#cccccc;font-family:'Liberation Sans', sans-serif;transform:scaleX(0.93);transform-origin:0 0;">Go Live</div><div class="t" style="left:1814.80px;top:997.90px;font-size:15.0px;color:#cccccc;font-family:'Liberation Sans', sans-serif;transform:scaleX(0.98);transform-origin:0 0;">Prettier</div><svg class="r" style="left:1512px;top:998px;" width="19" height="18" viewBox="0 0 19 18"><path d="M5 1.5C3 1.5 3 3 3 4.5v2.5C3 8 2 9 1 9c1 0 2 1 2 2v2.5c0 1.5 0 3 2 3M13.5 1.5c2 0 2 1.5 2 3v2" stroke="#cccccc" stroke-width="1.3" fill="none"/><circle cx="14" cy="13.3" r="3.3" fill="#cccccc"/></svg><svg class="r" style="left:1704px;top:998px;" width="16" height="18" viewBox="0 0 16 18"><circle cx="8" cy="7" r="1.8" stroke="#cccccc" stroke-width="1.3" fill="none"/><path d="M8 9v8M4.8 10.2a4.5 4.5 0 1 1 6.4 0M2.6 12.4a7.6 7.6 0 1 1 10.8 0" stroke="#cccccc" stroke-width="1.3" fill="none"/></svg><svg class="r" style="left:1794px;top:998px;" width="17" height="17" viewBox="0 0 17 17"><circle cx="8.5" cy="8.5" r="7.2" stroke="#cccccc" stroke-width="1.3" fill="none"/><path d="M3.5 13.5l10-10" stroke="#cccccc" stroke-width="1.3"/></svg><svg class="r" style="left:1885px;top:997px;" width="16" height="18" viewBox="0 0 16 18"><path d="M8 1.5a5 5 0 0 1 5 5v4.5l1.8 2.5H1.2L3 11V6.5a5 5 0 0 1 5-5zM6 15.5a2.2 2.2 0 0 0 4 0" stroke="#cccccc" stroke-width="1.3" fill="none" stroke-linejoin="round"/></svg><div class="r" style="left:0px;top:1020px;width:1919px;height:1.3px;background:#47494b;"></div><svg class="r" style="left:22px;top:1030px;" width="40" height="34" viewBox="0 0 40 34"><defs><linearGradient id="cg" x1="0" y1="0" x2="0" y2="1"><stop offset="0" stop-color="#b9cff5"/><stop offset="1" stop-color="#7ea6ea"/></linearGradient></defs><path d="M8 28.5a5.5 5.5 0 0 1-.6-11 8 8 0 0 1 15.2-3.2 6.2 6.2 0 0 1 9.4 5.3 4.5 4.5 0 0 1 .5 8.9z" fill="url(#cg)"/></svg><div class="r" style="left:39px;top:1028px;width:20px;height:20px;background:#f3919a;border-radius:50%;"></div><div class="t" style="left:44.50px;top:1030.62px;font-size:14px;color:#1a1a1a;font-family:'Liberation Sans', sans-serif;transform:scaleX(0.95);transform-origin:0 0;">1</div><div class="t" style="left:64.50px;top:1029.75px;font-size:16.25px;color:#ffffff;font-family:'Liberation Sans', sans-serif;transform:scaleX(0.845);transform-origin:0 0;">24°C</div><div class="t" style="left:64.50px;top:1049.75px;font-size:16.25px;color:#d6d6d6;font-family:'Liberation Sans', sans-serif;transform:scaleX(0.925);transform-origin:0 0;">Cloudy</div><svg class="r" style="left:695px;top:1036px;" width="29" height="29" viewBox="0 0 29 29"><defs><linearGradient id="wg" x1="0" y1="0" x2="1" y2="1"><stop offset="0" stop-color="#74dcff"/><stop offset="1" stop-color="#1a9dea"/></linearGradient></defs><rect x="0" y="0" width="13.7" height="13.7" rx="1.2" fill="url(#wg)"/><rect x="15.3" y="0" width="13.7" height="13.7" rx="1.2" fill="url(#wg)"/><rect x="0" y="15.3" width="13.7" height="13.7" rx="1.2" fill="url(#wg)"/><rect x="15.3" y="15.3" width="13.7" height="13.7" rx="1.2" fill="url(#wg)"/></svg><div class="r" style="left:741px;top:1030px;width:275px;height:40px;background:#3b4042;border-radius:20px;box-sizing:border-box;border:1px solid #4f5456;border-top-color:#5e6365;"></div><svg class="r" style="left:754px;top:1039px;" width="22" height="22" viewBox="0 0 22 22"><circle cx="9.5" cy="9.5" r="7" stroke="#e8e8e8" stroke-width="2" fill="none"/><path d="M14.7 14.7 20 20" stroke="#e8e8e8" stroke-width="2.2" stroke-linecap="round"/></svg><div class="t" style="left:786.50px;top:1042.05px;font-size:16.25px;color:#d8d8d8;font-family:'Liberation Sans', sans-serif;">Search</div><svg class="r" style="left:940px;top:1030px;" width="76" height="40" viewBox="0 0 76 40"><defs><linearGradient id="bush" x1="0" y1="0" x2="0" y2="1"><stop offset="0" stop-color="#d9c23a"/><stop offset="1" stop-color="#4f9a3a"/></linearGradient>
<radialGradient id="ball" cx="0.35" cy="0.3" r="0.8"><stop offset="0" stop-color="#ffffff" stop-opacity="0.35"/><stop offset="1" stop-color="#000000" stop-opacity="0.1"/></radialGradient></defs>
<path d="M8 34V23l3-1.5 2-3 3-0.5 2-3.5 3-0.5 3-2 3 .5 3 1.5V34z" fill="url(#bush)"/>
<path d="M71 34V23l-3-1.5-2-3-3-0.5-2-3.5-3-0.5-3-2-3 .5-2.5 1.5V34z" fill="url(#bush)"/>
<rect x="29.5" y="6.5" width="21.5" height="18" fill="#e2b98a"/><rect x="29" y="6.5" width="22.5" height="3.5" fill="#d6a878"/>
<path d="M37 24V16a2.25 2.25 0 0 1 4.5 0V24z" fill="#3a3f44"/>
<ellipse cx="40" cy="35" rx="23" ry="2.5" fill="#8a94a8"/>
<circle cx="36.5" cy="23.8" r="1.5" fill="#22b5b5"/><circle cx="40" cy="23.8" r="1.4" fill="#e04848"/><circle cx="44.5" cy="24" r="1.8" fill="#e04848"/>
<circle cx="33" cy="25.5" r="1.6" fill="#e04848"/><circle cx="37.5" cy="26.2" r="2" fill="#b776e8"/><circle cx="41.5" cy="26" r="2.2" fill="#f5871f"/><circle cx="48.5" cy="26.5" r="2.6" fill="#b776e8"/>
<circle cx="29" cy="27.5" r="2.8" fill="#a86ae0"/><circle cx="24.5" cy="30" r="2.6" fill="#e04848"/><circle cx="34.5" cy="29" r="2.6" fill="#1fb0b0"/><circle cx="45.5" cy="29" r="2.6" fill="#1fb0b0"/><circle cx="52.5" cy="29.5" r="2.6" fill="#e04848"/>
<circle cx="20.5" cy="33.8" r="3.3" fill="#3a9af5"/><circle cx="30" cy="33" r="3.6" fill="#a35cf0"/><circle cx="39.6" cy="32.5" r="4.2" fill="#dc3a3a"/><circle cx="49" cy="33" r="3.6" fill="#f5801a"/><circle cx="57.5" cy="32" r="3.2" fill="#1fabb0"/></svg><svg class="r" style="left:1030px;top:1036px;" width="32" height="28" viewBox="0 0 32 28"><path d="M1 3a2 2 0 0 1 2-2h8l3 3h15a2 2 0 0 1 2 2v3H1z" fill="#e8a317"/><rect x="0.5" y="4.5" width="31" height="22.5" rx="1.5" fill="#fcd35b"/><rect x="6" y="19" width="20" height="8" rx="1.5" fill="#1f7bd6"/><rect x="10" y="21.5" width="12" height="1.3" fill="#0b4a8f"/></svg><svg class="r" style="left:1080px;top:1030px;" width="42" height="38" viewBox="0 0 42 38"><defs><linearGradient id="bv" x1="0" y1="0" x2="1" y2="0"><stop offset="0" stop-color="#ff6200"/><stop offset="1" stop-color="#ff2a00"/></linearGradient></defs><path d="M15.5 4.7H26L29 6.5l4.5.7.5 3.8-1 3.5 1 2.5-3 10-10 8.5-10-8.5-3-10 1-2.5-1-3.5.5-3.8 4.5-.7z" fill="url(#bv)"/><path d="M11.5 14 15 9.8H27L30.5 14 28 19.5l-2 3.5-2.5-2.5-2.5 1.5-2.5-1.5-2.5 2.5-2-3.5z" fill="#ffffff"/><path d="M15 12.7l3.8.6 1 5.2 1.2 1.3 1.2-1.3 1-5.2 3.8-.6" stroke="#ff4a10" stroke-width="1.2" fill="none"/><path d="M17 25h8l-4 3.5z" fill="#ffffff"/></svg><div class="r" style="left:1097px;top:1070px;width:9px;height:3.5px;background:#9a9a9a;border-radius:2px;"></div><svg class="r" style="left:1140px;top:1036px;" width="32" height="31" viewBox="0 0 32 31"><path d="M16 2.5a13 13 0 0 0-11.2 19.6L3 28.5l6.6-1.7A13 13 0 1 0 16 2.5z" stroke="#25d366" stroke-width="3" fill="none" stroke-linejoin="round"/><path d="M11 9.5c1 0 1.5 2.5 2 3.5s-1.5 1.5-1 2.5c1 2 3 4 5 5 1 .5 1.5-1.5 2.5-1s3 1 3 2c0 2-2 3-3.5 3-4 0-10-6-10.5-10.5 0-2 1.5-4.5 2.5-4.5z" fill="#25d366"/></svg><div class="r" style="left:1149px;top:1029px;width:34px;height:20px;background:#52c4f7;border-radius:10px;"></div><div class="t" style="left:1154.50px;top:1030.92px;font-size:14px;color:#0a0a0a;font-family:'Liberation Sans', sans-serif;">99+</div><div class="r" style="left:1152px;top:1070px;width:8.5px;height:3.5px;background:#9a9a9a;border-radius:2px;"></div><div class="r" style="left:1186px;top:1025.5px;width:49.5px;height:49px;background:#2a2d31;border-radius:5px;box-sizing:border-box;border:1px solid #34373b;"></div><svg class="r" style="left:1196px;top:1035px;" width="30" height="30" viewBox="0 0 100 100"><path fill="#0a74c2" d="M96.4614 10.7962L75.8569 0.875542C73.4719 -0.272773 70.6217 0.211611 68.75 2.08333L1.29858 63.5832C-0.515693 65.2373 -0.513607 68.0937 1.30308 69.7452L6.81272 74.754C8.29793 76.1042 10.5347 76.2036 12.1338 74.9905L93.3609 13.3699C96.0859 11.3026 100 13.2462 100 16.6667V16.4275C100 14.0265 98.6246 11.8378 96.4614 10.7962Z"/><path fill="#0b8ad9" d="M96.4614 89.2038L75.8569 99.1245C73.4719 100.273 70.6217 99.7884 68.75 97.9167L1.29858 36.4169C-0.515693 34.7627 -0.513607 31.9063 1.30308 30.2548L6.81272 25.246C8.29793 23.8958 10.5347 23.7964 12.1338 25.0095L93.3609 86.6301C96.0859 88.6974 100 86.7538 100 83.3334V83.5726C100 85.9735 98.6246 88.1622 96.4614 89.2038Z"/><path fill="#24a9f2" d="M75.8578 99.1263C73.4721 100.274 70.6219 99.7885 68.75 97.9166C71.0564 100.223 75 98.5895 75 95.3278V4.67213C75 1.41039 71.0564 -0.223106 68.75 2.08329C70.6219 0.211402 73.4721 -0.273666 75.8578 0.873633L96.4587 10.7807C98.6234 11.8217 100 14.0112 100 16.4132V83.5871C100 85.9891 98.6234 88.1786 96.4586 89.2196L75.8578 99.1263Z"/></svg><div class="r" style="left:1201px;top:1070px;width:20px;height:3.8px;background:#4cc2ff;border-radius:2px;"></div><svg class="r" style="left:1512px;top:1044px;" width="18" height="11" viewBox="0 0 18 11"><path d="M2 9.5 9 2.5l7 7" stroke="#ffffff" stroke-width="1.6" fill="none"/></svg><svg class="r" style="left:1550px;top:1042px;" width="22" height="15" viewBox="0 0 22 15"><path d="M5 14a4.5 4.5 0 0 1-.5-9A6 6 0 0 1 15 4a4.5 4.5 0 0 1 2.5 10z" fill="#cfcfcf"/><path d="M7 14a3.5 3.5 0 0 1 1-6.8 5 5 0 0 1 9.2 1A3.3 3.3 0 0 1 21 14z" fill="#e6e6e6"/></svg><div class="t" style="left:1594.30px;top:1031.94px;font-size:15.5px;color:#ffffff;font-family:'Liberation Sans', sans-serif;transform:scaleX(0.92);transform-origin:0 0;">ENG</div><div class="t" style="left:1601.50px;top:1051.14px;font-size:15.5px;color:#ffffff;font-family:'Liberation Sans', sans-serif;transform:scaleX(0.95);transform-origin:0 0;">IN</div><svg class="r" style="left:1645px;top:1041px;" width="22" height="17" viewBox="0 0 22 17"><path d="M1.5 6a13.5 13.5 0 0 1 19 0M4.5 9a9.2 9.2 0 0 1 13 0M7.5 12a5 5 0 0 1 7 0" stroke="#ffffff" stroke-width="1.7" fill="none" stroke-linecap="round"/><circle cx="11" cy="15" r="1.5" fill="#ffffff"/></svg><svg class="r" style="left:1675px;top:1041px;" width="22" height="18" viewBox="0 0 22 18"><path d="M1.5 6.5h3.5L10 2v14l-5-4.5H1.5z" stroke="#ffffff" stroke-width="1.5" fill="none" stroke-linejoin="round"/><path d="M13 6a4 4 0 0 1 0 6M15.5 3.5a7.5 7.5 0 0 1 0 11" stroke="#ffffff" stroke-width="1.5" fill="none" stroke-linecap="round"/><path d="M18.5 1.5a10.5 10.5 0 0 1 0 15" stroke="#777777" stroke-width="1.4" fill="none" stroke-linecap="round"/></svg><svg class="r" style="left:1705px;top:1044px;" width="22" height="13" viewBox="0 0 22 13"><rect x="1" y="1" width="17.5" height="11" rx="2.5" stroke="#ffffff" stroke-width="1.6" fill="none"/><rect x="3.2" y="3.2" width="13" height="6.6" rx="1" fill="#ffffff"/><rect x="19.5" y="4.5" width="2" height="4" rx="0.8" fill="#ffffff"/></svg><div class="t" style="left:1762.00px;top:1030.84px;font-size:15.5px;color:#ffffff;font-family:'Liberation Sans', sans-serif;transform:scaleX(0.955);transform-origin:0 0;">3:07 PM</div><div class="t" style="left:1746.70px;top:1050.44px;font-size:15.5px;color:#ffffff;font-family:'Liberation Sans', sans-serif;">7/17/2024</div><svg class="r" style="left:1826px;top:1040px;" width="18" height="20" viewBox="0 0 18 20"><path d="M9 1.5a6 6 0 0 1 6 6v5l2.2 3H0.8L3 12.5v-5a6 6 0 0 1 6-6z" fill="#7fd3f5"/><path d="M6 17.2a3 3 0 0 0 6 0z" fill="#7fd3f5"/></svg><svg class="r" style="left:1860px;top:1032px;" width="40" height="36" viewBox="0 0 40 36"><defs><linearGradient id="c1" x1="0" y1="0" x2="0" y2="1"><stop offset="0" stop-color="#2bb8f5"/><stop offset="0.5" stop-color="#5fbf6a"/><stop offset="1" stop-color="#e5c81c"/></linearGradient>
<linearGradient id="c2" x1="0" y1="1" x2="1" y2="0"><stop offset="0" stop-color="#fa6a78"/><stop offset="0.5" stop-color="#e04fb0"/><stop offset="1" stop-color="#9a4ff5"/></linearGradient></defs>
<path d="M22 5h3.5a3 3 0 0 1 2.8 2l2.2 5.5H23z" fill="#1f56d8"/>
<path d="M14 5h9.5L17.5 21.5a3 3 0 0 1-2.8 2H8.5a2.5 2.5 0 0 1-2.4-3.3L11.2 7a3 3 0 0 1 2.8-2z" fill="url(#c1)"/>
<path d="M26 12h6a2.5 2.5 0 0 1 2.4 3.2L31.5 23.5H19.5L23.2 14a3 3 0 0 1 2.8-2z" fill="url(#c2)"/>
<rect x="12.5" y="24.5" width="22.5" height="8.3" rx="2" fill="#ffc800"/>
<text x="23.75" y="31.6" font-family="Liberation Sans" font-weight="700" font-size="8" text-anchor="middle" fill="#111111" letter-spacing="0.4">PRE</text></svg><svg class="r" style="left:1791px;top:115px;opacity:0.38;" width="112" height="160" viewBox="0 0 112 160"><rect x="0.00" y="0.50" width="6.06" height="1.4" fill="#c586c0"/><rect x="7.07" y="0.50" width="9.09" height="1.4" fill="#4ec9b0"/><rect x="17.17" y="0.50" width="2.02" height="1.4" fill="#9cdcfe"/><rect x="20.20" y="0.50" width="2.02" height="1.4" fill="#4ec9b0"/><rect x="0.00" y="2.48" width="6.06" height="1.4" fill="#c586c0"/><rect x="7.07" y="2.48" width="10.10" height="1.4" fill="#4ec9b0"/><rect x="18.18" y="2.48" width="2.02" height="1.4" fill="#9cdcfe"/><rect x="21.21" y="2.48" width="2.02" height="1.4" fill="#4ec9b0"/><rect x="0.00" y="4.46" width="6.06" height="1.4" fill="#c586c0"/><rect x="7.07" y="4.46" width="5.05" height="1.4" fill="#4ec9b0"/><rect x="13.13" y="4.46" width="2.02" height="1.4" fill="#9cdcfe"/><rect x="16.16" y="4.46" width="2.02" height="1.4" fill="#4ec9b0"/><rect x="0.00" y="8.42" width="1.01" height="1.4" fill="#6a9955"/><rect x="2.02" y="8.42" width="10.10" height="1.4" fill="#6a9955"/><rect x="13.13" y="8.42" width="5.05" height="1.4" fill="#6a9955"/><rect x="19.19" y="8.42" width="10.10" height="1.4" fill="#6a9955"/><rect x="0.00" y="10.40" width="3.03" height="1.4" fill="#569cd6"/><rect x="4.04" y="10.40" width="16.16" height="1.4" fill="#9cdcfe"/><rect x="20.20" y="10.40" width="1.01" height="1.4" fill="#ffd700"/><rect x="21.21" y="10.40" width="10.10" height="1.4" fill="#9cdcfe"/><rect x="31.31" y="10.40" width="1.01" height="1.4" fill="#ffd700"/><rect x="32.32" y="10.40" width="1.01" height="1.4" fill="#d4d4d4"/><rect x="4.04" y="12.38" width="5.05" height="1.4" fill="#9cdcfe"/><rect x="10.10" y="12.38" width="1.01" height="1.4" fill="#d4d4d4"/><rect x="12.12" y="12.38" width="2.02" height="1.4" fill="#4ec9b0"/><rect x="14.14" y="12.38" width="1.01" height="1.4" fill="#d4d4d4"/><rect x="15.15" y="12.38" width="5.05" height="1.4" fill="#9cdcfe"/><rect x="20.20" y="12.38" width="1.01" height="1.4" fill="#d4d4d4"/><rect x="21.21" y="12.38" width="6.06" height="1.4" fill="#9cdcfe"/><rect x="27.27" y="12.38" width="1.01" height="1.4" fill="#d4d4d4"/><rect x="28.28" y="12.38" width="10.10" height="1.4" fill="#9cdcfe"/><rect x="38.38" y="12.38" width="1.01" height="1.4" fill="#ffd700"/><rect x="39.39" y="12.38" width="35.35" height="1.4" fill="#ce9178"/><rect x="74.74" y="12.38" width="1.01" height="1.4" fill="#ffd700"/><rect x="4.04" y="14.36" width="5.05" height="1.4" fill="#9cdcfe"/><rect x="10.10" y="14.36" width="1.01" height="1.4" fill="#d4d4d4"/><rect x="12.12" y="14.36" width="2.02" height="1.4" fill="#4ec9b0"/><rect x="14.14" y="14.36" width="1.01" height="1.4" fill="#d4d4d4"/><rect x="15.15" y="14.36" width="5.05" height="1.4" fill="#9cdcfe"/><rect x="20.20" y="14.36" width="1.01" height="1.4" fill="#d4d4d4"/><rect x="21.21" y="14.36" width="13.13" height="1.4" fill="#9cdcfe"/><rect x="34.34" y="14.36" width="1.01" height="1.4" fill="#d4d4d4"/><rect x="35.35" y="14.36" width="5.05" height="1.4" fill="#9cdcfe"/><rect x="40.40" y="14.36" width="1.01" height="1.4" fill="#d4d4d4"/><rect x="41.41" y="14.36" width="8.08" height="1.4" fill="#9cdcfe"/><rect x="49.49" y="14.36" width="1.01" height="1.4" fill="#ffd700"/><rect x="50.50" y="14.36" width="10.10" height="1.4" fill="#9cdcfe"/><rect x="60.60" y="14.36" width="1.01" height="1.4" fill="#d4d4d4"/><rect x="61.61" y="14.36" width="11.11" height="1.4" fill="#9cdcfe"/><rect x="72.72" y="14.36" width="1.01" height="1.4" fill="#d4d4d4"/><rect x="73.73" y="14.36" width="1.01" height="1.4" fill="#ffd700"/><rect x="74.74" y="14.36" width="7.07" height="1.4" fill="#d4d4d4"/><rect x="81.81" y="14.36" width="2.02" height="1.4" fill="#ffd700"/><rect x="4.04" y="16.34" width="9.09" height="1.4" fill="#9cdcfe"/><rect x="14.14" y="16.34" width="1.01" height="1.4" fill="#d4d4d4"/><rect x="16.16" y="16.34" width="2.02" height="1.4" fill="#4ec9b0"/><rect x="18.18" y="16.34" width="1.01" height="1.4" fill="#d4d4d4"/><rect x="19.19" y="16.34" width="5.05" height="1.4" fill="#9cdcfe"/><rect x="24.24" y="16.34" width="1.01" height="1.4" fill="#d4d4d4"/><rect x="25.25" y="16.34" width="13.13" height="1.4" fill="#9cdcfe"/><rect x="38.38" y="16.34" width="1.01" height="1.4" fill="#d4d4d4"/><rect x="39.39" y="16.34" width="5.05" height="1.4" fill="#9cdcfe"/><rect x="44.44" y="16.34" width="1.01" height="1.4" fill="#d4d4d4"/><rect x="45.45" y="16.34" width="12.12" height="1.4" fill="#9cdcfe"/><rect x="57.57" y="16.34" width="1.01" height="1.4" fill="#ffd700"/><rect x="58.58" y="16.34" width="5.05" height="1.4" fill="#9cdcfe"/><rect x="63.63" y="16.34" width="1.01" height="1.4" fill="#ffd700"/><rect x="4.04" y="18.32" width="9.09" height="1.4" fill="#9cdcfe"/><rect x="14.14" y="18.32" width="1.01" height="1.4" fill="#d4d4d4"/><rect x="16.16" y="18.32" width="2.02" height="1.4" fill="#4ec9b0"/><rect x="18.18" y="18.32" width="1.01" height="1.4" fill="#d4d4d4"/><rect x="19.19" y="18.32" width="5.05" height="1.4" fill="#9cdcfe"/><rect x="24.24" y="18.32" width="2.02" height="1.4" fill="#ffd700"/><rect x="26.26" y="18.32" width="9.09" height="1.4" fill="#9cdcfe"/><rect x="35.35" y="18.32" width="2.02" height="1.4" fill="#ffd700"/><rect x="38.38" y="18.32" width="8.08" height="1.4" fill="#6a9955"/><rect x="47.47" y="18.32" width="6.06" height="1.4" fill="#6a9955"/><rect x="54.54" y="18.32" width="5.05" height="1.4" fill="#6a9955"/><rect x="60.60" y="18.32" width="2.02" height="1.4" fill="#6a9955"/><rect x="63.63" y="18.32" width="5.05" height="1.4" fill="#6a9955"/><rect x="4.04" y="20.30" width="11.11" height="1.4" fill="#9cdcfe"/><rect x="16.16" y="20.30" width="1.01" height="1.4" fill="#d4d4d4"/><rect x="18.18" y="20.30" width="5.05" height="1.4" fill="#9cdcfe"/><rect x="23.23" y="20.30" width="1.01" height="1.4" fill="#d4d4d4"/><rect x="24.24" y="20.30" width="7.07" height="1.4" fill="#9cdcfe"/><rect x="31.31" y="20.30" width="1.01" height="1.4" fill="#ffd700"/><rect x="32.32" y="20.30" width="9.09" height="1.4" fill="#9cdcfe"/><rect x="41.41" y="20.30" width="1.01" height="1.4" fill="#ffd700"/><rect x="4.04" y="22.28" width="6.06" height="1.4" fill="#c586c0"/><rect x="11.11" y="22.28" width="2.02" height="1.4" fill="#4ec9b0"/><rect x="13.13" y="22.28" width="1.01" height="1.4" fill="#d4d4d4"/><rect x="14.14" y="22.28" width="6.06" height="1.4" fill="#9cdcfe"/><rect x="20.20" y="22.28" width="1.01" height="1.4" fill="#ffd700"/><rect x="21.21" y="22.28" width="11.11" height="1.4" fill="#9cdcfe"/><rect x="32.32" y="22.28" width="1.01" height="1.4" fill="#ffd700"/><rect x="34.34" y="22.28" width="7.07" height="1.4" fill="#6a9955"/><rect x="42.42" y="22.28" width="5.05" height="1.4" fill="#6a9955"/><rect x="48.48" y="22.28" width="2.02" height="1.4" fill="#6a9955"/><rect x="51.51" y="22.28" width="3.03" height="1.4" fill="#6a9955"/><rect x="55.55" y="22.28" width="7.07" height="1.4" fill="#6a9955"/><rect x="0.00" y="26.24" width="1.01" height="1.4" fill="#6a9955"/><rect x="2.02" y="26.24" width="7.07" height="1.4" fill="#6a9955"/><rect x="0.00" y="28.22" width="2.02" height="1.4" fill="#4ec9b0"/><rect x="2.02" y="28.22" width="1.01" height="1.4" fill="#d4d4d4"/><rect x="3.03" y="28.22" width="7.07" height="1.4" fill="#9cdcfe"/><rect x="10.10" y="28.22" width="1.01" height="1.4" fill="#d4d4d4"/><rect x="11.11" y="28.22" width="5.05" height="1.4" fill="#9cdcfe"/><rect x="16.16" y="28.22" width="1.01" height="1.4" fill="#ffd700"/><rect x="17.17" y="28.22" width="11.11" height="1.4" fill="#ce9178"/><rect x="28.28" y="28.22" width="1.01" height="1.4" fill="#ffd700"/><rect x="0.00" y="30.20" width="8.08" height="1.4" fill="#9cdcfe"/><rect x="9.09" y="30.20" width="1.01" height="1.4" fill="#d4d4d4"/><rect x="11.11" y="30.20" width="2.02" height="1.4" fill="#4ec9b0"/><rect x="13.13" y="30.20" width="1.01" height="1.4" fill="#d4d4d4"/><rect x="14.14" y="30.20" width="7.07" height="1.4" fill="#9cdcfe"/><rect x="21.21" y="30.20" width="1.01" height="1.4" fill="#d4d4d4"/><rect x="22.22" y="30.20" width="9.09" height="1.4" fill="#9cdcfe"/><rect x="31.31" y="30.20" width="1.01" height="1.4" fill="#ffd700"/><rect x="32.32" y="30.20" width="7.07" height="1.4" fill="#ce9178"/><rect x="40.40" y="30.20" width="5.05" height="1.4" fill="#ce9178"/><rect x="45.45" y="30.20" width="1.01" height="1.4" fill="#d4d4d4"/><rect x="46.46" y="30.20" width="1.01" height="1.4" fill="#ffd700"/><rect x="47.47" y="30.20" width="6.06" height="1.4" fill="#ce9178"/><rect x="53.53" y="30.20" width="1.01" height="1.4" fill="#d4d4d4"/><rect x="54.54" y="30.20" width="7.07" height="1.4" fill="#ce9178"/><rect x="61.61" y="30.20" width="1.01" height="1.4" fill="#d4d4d4"/><rect x="62.62" y="30.20" width="8.08" height="1.4" fill="#ce9178"/><rect x="71.71" y="30.20" width="12.12" height="1.4" fill="#ce9178"/><rect x="83.83" y="30.20" width="2.02" height="1.4" fill="#ffd700"/><rect x="0.00" y="34.16" width="1.01" height="1.4" fill="#6a9955"/><rect x="2.02" y="34.16" width="4.04" height="1.4" fill="#6a9955"/><rect x="7.07" y="34.16" width="4.04" height="1.4" fill="#6a9955"/><rect x="0.00" y="36.14" width="2.02" height="1.4" fill="#c586c0"/><rect x="3.03" y="36.14" width="8.08" height="1.4" fill="#9cdcfe"/><rect x="12.12" y="36.14" width="2.02" height="1.4" fill="#d4d4d4"/><rect x="15.15" y="36.14" width="6.06" height="1.4" fill="#ce9178"/><rect x="21.21" y="36.14" width="1.01" height="1.4" fill="#d4d4d4"/><rect x="4.04" y="38.12" width="2.02" height="1.4" fill="#4ec9b0"/><rect x="6.06" y="38.12" width="1.01" height="1.4" fill="#d4d4d4"/><rect x="7.07" y="38.12" width="6.06" height="1.4" fill="#9cdcfe"/><rect x="13.13" y="38.12" width="1.01" height="1.4" fill="#ffd700"/><rect x="14.14" y="38.12" width="6.06" height="1.4" fill="#ce9178"/><rect x="21.21" y="38.12" width="7.07" height="1.4" fill="#ce9178"/><rect x="29.29" y="38.12" width="11.11" height="1.4" fill="#ce9178"/><rect x="41.41" y="38.12" width="7.07" height="1.4" fill="#ce9178"/><rect x="48.48" y="38.12" width="1.01" height="1.4" fill="#ffd700"/><rect x="4.04" y="40.10" width="10.10" height="1.4" fill="#9cdcfe"/><rect x="15.15" y="40.10" width="1.01" height="1.4" fill="#d4d4d4"/><rect x="17.17" y="40.10" width="16.16" height="1.4" fill="#ce9178"/><rect x="4.04" y="42.08" width="2.02" height="1.4" fill="#4ec9b0"/><rect x="6.06" y="42.08" width="1.01" height="1.4" fill="#d4d4d4"/><rect x="7.07" y="42.08" width="5.05" height="1.4" fill="#9cdcfe"/><rect x="12.12" y="42.08" width="1.01" height="1.4" fill="#ffd700"/><rect x="13.13" y="42.08" width="10.10" height="1.4" fill="#9cdcfe"/><rect x="23.23" y="42.08" width="1.01" height="1.4" fill="#d4d4d4"/><rect x="24.24" y="42.08" width="16.16" height="1.4" fill="#9cdcfe"/><rect x="40.40" y="42.08" width="1.01" height="1.4" fill="#d4d4d4"/><rect x="41.41" y="42.08" width="4.04" height="1.4" fill="#569cd6"/><rect x="45.45" y="42.08" width="1.01" height="1.4" fill="#ffd700"/><rect x="4.04" y="44.06" width="2.02" height="1.4" fill="#4ec9b0"/><rect x="6.06" y="44.06" width="1.01" height="1.4" fill="#d4d4d4"/><rect x="7.07" y="44.06" width="8.08" height="1.4" fill="#9cdcfe"/><rect x="15.15" y="44.06" width="1.01" height="1.4" fill="#ffd700"/><rect x="16.16" y="44.06" width="3.03" height="1.4" fill="#ce9178"/><rect x="4.04" y="46.04" width="7.07" height="1.4" fill="#ce9178"/><rect x="12.12" y="46.04" width="2.02" height="1.4" fill="#ce9178"/><rect x="15.15" y="46.04" width="3.03" height="1.4" fill="#ce9178"/><rect x="19.19" y="46.04" width="5.05" height="1.4" fill="#ce9178"/><rect x="25.25" y="46.04" width="7.07" height="1.4" fill="#ce9178"/><rect x="33.33" y="46.04" width="11.11" height="1.4" fill="#ce9178"/><rect x="45.45" y="46.04" width="7.07" height="1.4" fill="#ce9178"/><rect x="4.04" y="50.00" width="3.03" height="1.4" fill="#ce9178"/><rect x="8.08" y="50.00" width="7.07" height="1.4" fill="#ce9178"/><rect x="16.16" y="50.00" width="2.02" height="1.4" fill="#ce9178"/><rect x="19.19" y="50.00" width="2.02" height="1.4" fill="#ce9178"/><rect x="22.22" y="50.00" width="4.04" height="1.4" fill="#ce9178"/><rect x="27.27" y="50.00" width="2.02" height="1.4" fill="#ce9178"/><rect x="30.30" y="50.00" width="11.11" height="1.4" fill="#ce9178"/><rect x="42.42" y="50.00" width="5.05" height="1.4" fill="#ce9178"/><rect x="48.48" y="50.00" width="8.08" height="1.4" fill="#ce9178"/><rect x="57.57" y="50.00" width="12.12" height="1.4" fill="#ce9178"/><rect x="70.70" y="50.00" width="6.06" height="1.4" fill="#ce9178"/><rect x="77.77" y="50.00" width="2.02" height="1.4" fill="#ce9178"/><rect x="80.80" y="50.00" width="5.05" height="1.4" fill="#ce9178"/><rect x="86.86" y="50.00" width="2.02" height="1.4" fill="#ce9178"/><rect x="89.89" y="50.00" width="1.01" height="1.4" fill="#ce9178"/><rect x="91.91" y="50.00" width="6.06" height="1.4" fill="#ce9178"/><rect x="98.98" y="50.00" width="3.03" height="1.4" fill="#ce9178"/><rect x="103.02" y="50.00" width="3.03" height="1.4" fill="#ce9178"/><rect x="107.06" y="50.00" width="3.94" height="1.4" fill="#ce9178"/><rect x="4.04" y="53.96" width="3.03" height="1.4" fill="#ce9178"/><rect x="8.08" y="53.96" width="3.03" height="1.4" fill="#ce9178"/><rect x="12.12" y="53.96" width="2.02" height="1.4" fill="#ce9178"/><rect x="15.15" y="53.96" width="5.05" height="1.4" fill="#ce9178"/><rect x="4.04" y="55.94" width="2.02" height="1.4" fill="#ce9178"/><rect x="7.07" y="55.94" width="8.08" height="1.4" fill="#ce9178"/><rect x="16.16" y="55.94" width="8.08" height="1.4" fill="#ce9178"/><rect x="25.25" y="55.94" width="2.02" height="1.4" fill="#ce9178"/><rect x="28.28" y="55.94" width="2.02" height="1.4" fill="#ce9178"/><rect x="31.31" y="55.94" width="3.03" height="1.4" fill="#ce9178"/><rect x="35.35" y="55.94" width="9.09" height="1.4" fill="#ce9178"/><rect x="45.45" y="55.94" width="13.13" height="1.4" fill="#ce9178"/><rect x="59.59" y="55.94" width="4.04" height="1.4" fill="#ce9178"/><rect x="64.64" y="55.94" width="3.03" height="1.4" fill="#ce9178"/><rect x="68.68" y="55.94" width="6.06" height="1.4" fill="#ce9178"/><rect x="75.75" y="55.94" width="2.02" height="1.4" fill="#ce9178"/><rect x="78.78" y="55.94" width="5.05" height="1.4" fill="#ce9178"/><rect x="84.84" y="55.94" width="2.02" height="1.4" fill="#ce9178"/><rect x="87.87" y="55.94" width="1.01" height="1.4" fill="#ce9178"/><rect x="89.89" y="55.94" width="5.05" height="1.4" fill="#ce9178"/><rect x="95.95" y="55.94" width="4.04" height="1.4" fill="#ce9178"/><rect x="101.00" y="55.94" width="9.09" height="1.4" fill="#ce9178"/><rect x="4.04" y="57.92" width="2.02" height="1.4" fill="#ce9178"/><rect x="7.07" y="57.92" width="13.13" height="1.4" fill="#ce9178"/><rect x="21.21" y="57.92" width="3.03" height="1.4" fill="#ce9178"/><rect x="25.25" y="57.92" width="6.06" height="1.4" fill="#ce9178"/><rect x="32.32" y="57.92" width="4.04" height="1.4" fill="#ce9178"/><rect x="37.37" y="57.92" width="7.07" height="1.4" fill="#ce9178"/><rect x="45.45" y="57.92" width="3.03" height="1.4" fill="#ce9178"/><rect x="49.49" y="57.92" width="5.05" height="1.4" fill="#ce9178"/><rect x="55.55" y="57.92" width="5.05" height="1.4" fill="#ce9178"/><rect x="61.61" y="57.92" width="8.08" height="1.4" fill="#ce9178"/><rect x="70.70" y="57.92" width="10.10" height="1.4" fill="#ce9178"/><rect x="81.81" y="57.92" width="2.02" height="1.4" fill="#ce9178"/><rect x="84.84" y="57.92" width="8.08" height="1.4" fill="#ce9178"/><rect x="93.93" y="57.92" width="9.09" height="1.4" fill="#ce9178"/><rect x="104.03" y="57.92" width="6.97" height="1.4" fill="#ce9178"/><rect x="4.04" y="59.90" width="2.02" height="1.4" fill="#ce9178"/><rect x="7.07" y="59.90" width="12.12" height="1.4" fill="#ce9178"/><rect x="20.20" y="59.90" width="4.04" height="1.4" fill="#ce9178"/><rect x="25.25" y="59.90" width="3.03" height="1.4" fill="#ce9178"/><rect x="29.29" y="59.90" width="7.07" height="1.4" fill="#ce9178"/><rect x="37.37" y="59.90" width="3.03" height="1.4" fill="#ce9178"/><rect x="41.41" y="59.90" width="15.15" height="1.4" fill="#ce9178"/><rect x="57.57" y="59.90" width="3.03" height="1.4" fill="#ce9178"/><rect x="61.61" y="59.90" width="7.07" height="1.4" fill="#ce9178"/><rect x="69.69" y="59.90" width="7.07" height="1.4" fill="#ce9178"/><rect x="4.04" y="63.86" width="3.03" height="1.4" fill="#ce9178"/><rect x="8.08" y="63.86" width="3.03" height="1.4" fill="#ce9178"/><rect x="12.12" y="63.86" width="6.06" height="1.4" fill="#ce9178"/><rect x="19.19" y="63.86" width="3.03" height="1.4" fill="#ce9178"/><rect x="4.04" y="65.84" width="1.01" height="1.4" fill="#ce9178"/><rect x="6.06" y="65.84" width="13.13" height="1.4" fill="#ce9178"/><rect x="20.20" y="65.84" width="3.03" height="1.4" fill="#ce9178"/><rect x="24.24" y="65.84" width="6.06" height="1.4" fill="#ce9178"/><rect x="31.31" y="65.84" width="8.08" height="1.4" fill="#ce9178"/><rect x="40.40" y="65.84" width="16.16" height="1.4" fill="#ce9178"/><rect x="57.57" y="65.84" width="7.07" height="1.4" fill="#ce9178"/><rect x="65.65" y="65.84" width="8.08" height="1.4" fill="#ce9178"/><rect x="74.74" y="65.84" width="10.10" height="1.4" fill="#ce9178"/><rect x="85.85" y="65.84" width="3.03" height="1.4" fill="#ce9178"/><rect x="89.89" y="65.84" width="8.08" height="1.4" fill="#ce9178"/><rect x="98.98" y="65.84" width="7.07" height="1.4" fill="#ce9178"/><rect x="107.06" y="65.84" width="3.94" height="1.4" fill="#ce9178"/><rect x="4.04" y="67.82" width="1.01" height="1.4" fill="#ce9178"/><rect x="6.06" y="67.82" width="18.18" height="1.4" fill="#ce9178"/><rect x="25.25" y="67.82" width="6.06" height="1.4" fill="#ce9178"/><rect x="32.32" y="67.82" width="3.03" height="1.4" fill="#ce9178"/><rect x="36.36" y="67.82" width="9.09" height="1.4" fill="#ce9178"/><rect x="46.46" y="67.82" width="9.09" height="1.4" fill="#ce9178"/><rect x="56.56" y="67.82" width="3.03" height="1.4" fill="#ce9178"/><rect x="60.60" y="67.82" width="8.08" height="1.4" fill="#ce9178"/><rect x="69.69" y="67.82" width="4.04" height="1.4" fill="#ce9178"/><rect x="74.74" y="67.82" width="11.11" height="1.4" fill="#ce9178"/><rect x="4.04" y="69.80" width="1.01" height="1.4" fill="#ce9178"/><rect x="6.06" y="69.80" width="6.06" height="1.4" fill="#ce9178"/><rect x="13.13" y="69.80" width="3.03" height="1.4" fill="#ce9178"/><rect x="17.17" y="69.80" width="12.12" height="1.4" fill="#ce9178"/><rect x="30.30" y="69.80" width="7.07" height="1.4" fill="#ce9178"/><rect x="38.38" y="69.80" width="7.07" height="1.4" fill="#ce9178"/><rect x="46.46" y="69.80" width="2.02" height="1.4" fill="#ce9178"/><rect x="49.49" y="69.80" width="8.08" height="1.4" fill="#ce9178"/><rect x="58.58" y="69.80" width="8.08" height="1.4" fill="#ce9178"/><rect x="67.67" y="69.80" width="3.03" height="1.4" fill="#ce9178"/><rect x="71.71" y="69.80" width="5.05" height="1.4" fill="#ce9178"/><rect x="77.77" y="69.80" width="16.16" height="1.4" fill="#ce9178"/><rect x="4.04" y="73.76" width="3.03" height="1.4" fill="#ce9178"/><rect x="8.08" y="73.76" width="3.03" height="1.4" fill="#ce9178"/><rect x="12.12" y="73.76" width="7.07" height="1.4" fill="#ce9178"/><rect x="4.04" y="75.74" width="5.05" height="1.4" fill="#ce9178"/><rect x="10.10" y="75.74" width="2.02" height="1.4" fill="#ce9178"/><rect x="13.13" y="75.74" width="3.03" height="1.4" fill="#ce9178"/><rect x="17.17" y="75.74" width="9.09" height="1.4" fill="#ce9178"/><rect x="27.27" y="75.74" width="13.13" height="1.4" fill="#ce9178"/><rect x="41.41" y="75.74" width="4.04" height="1.4" fill="#ce9178"/><rect x="46.46" y="75.74" width="2.02" height="1.4" fill="#ce9178"/><rect x="49.49" y="75.74" width="3.03" height="1.4" fill="#ce9178"/><rect x="53.53" y="75.74" width="7.07" height="1.4" fill="#ce9178"/><rect x="61.61" y="75.74" width="2.02" height="1.4" fill="#ce9178"/><rect x="64.64" y="75.74" width="6.06" height="1.4" fill="#ce9178"/><rect x="71.71" y="75.74" width="2.02" height="1.4" fill="#ce9178"/><rect x="74.74" y="75.74" width="5.05" height="1.4" fill="#ce9178"/><rect x="80.80" y="75.74" width="3.03" height="1.4" fill="#ce9178"/><rect x="84.84" y="75.74" width="10.10" height="1.4" fill="#ce9178"/><rect x="95.95" y="75.74" width="3.03" height="1.4" fill="#ce9178"/><rect x="99.99" y="75.74" width="5.05" height="1.4" fill="#ce9178"/><rect x="106.05" y="75.74" width="2.02" height="1.4" fill="#ce9178"/><rect x="109.08" y="75.74" width="1.92" height="1.4" fill="#ce9178"/><rect x="4.04" y="79.70" width="3.03" height="1.4" fill="#ce9178"/><rect x="8.08" y="79.70" width="5.05" height="1.4" fill="#ce9178"/><rect x="14.14" y="79.70" width="2.02" height="1.4" fill="#ce9178"/><rect x="4.04" y="81.68" width="5.05" height="1.4" fill="#ce9178"/><rect x="10.10" y="81.68" width="4.04" height="1.4" fill="#ce9178"/><rect x="15.15" y="81.68" width="5.05" height="1.4" fill="#ce9178"/><rect x="21.21" y="81.68" width="3.03" height="1.4" fill="#ce9178"/><rect x="25.25" y="81.68" width="8.08" height="1.4" fill="#ce9178"/><rect x="34.34" y="81.68" width="3.03" height="1.4" fill="#ce9178"/><rect x="38.38" y="81.68" width="5.05" height="1.4" fill="#ce9178"/><rect x="44.44" y="81.68" width="3.03" height="1.4" fill="#ce9178"/><rect x="48.48" y="81.68" width="3.03" height="1.4" fill="#ce9178"/><rect x="52.52" y="81.68" width="5.05" height="1.4" fill="#ce9178"/><rect x="58.58" y="81.68" width="2.02" height="1.4" fill="#ce9178"/><rect x="61.61" y="81.68" width="3.03" height="1.4" fill="#ce9178"/><rect x="65.65" y="81.68" width="9.09" height="1.4" fill="#ce9178"/><rect x="75.75" y="81.68" width="5.05" height="1.4" fill="#ce9178"/><rect x="4.04" y="83.66" width="3.03" height="1.4" fill="#ce9178"/><rect x="7.07" y="83.66" width="1.01" height="1.4" fill="#ffd700"/><rect x="0.00" y="87.62" width="4.04" height="1.4" fill="#c586c0"/><rect x="5.05" y="87.62" width="8.08" height="1.4" fill="#9cdcfe"/><rect x="14.14" y="87.62" width="2.02" height="1.4" fill="#d4d4d4"/><rect x="17.17" y="87.62" width="7.07" height="1.4" fill="#ce9178"/><rect x="24.24" y="87.62" width="1.01" height="1.4" fill="#d4d4d4"/><rect x="4.04" y="89.60" width="2.02" height="1.4" fill="#4ec9b0"/><rect x="6.06" y="89.60" width="1.01" height="1.4" fill="#d4d4d4"/><rect x="7.07" y="89.60" width="6.06" height="1.4" fill="#9cdcfe"/><rect x="13.13" y="89.60" width="1.01" height="1.4" fill="#ffd700"/><rect x="14.14" y="89.60" width="7.07" height="1.4" fill="#ce9178"/><rect x="21.21" y="89.60" width="1.01" height="1.4" fill="#ffd700"/><rect x="4.04" y="91.58" width="2.02" height="1.4" fill="#4ec9b0"/><rect x="6.06" y="91.58" width="1.01" height="1.4" fill="#d4d4d4"/><rect x="7.07" y="91.58" width="8.08" height="1.4" fill="#9cdcfe"/><rect x="15.15" y="91.58" width="1.01" height="1.4" fill="#ffd700"/><rect x="16.16" y="91.58" width="3.03" height="1.4" fill="#ce9178"/><rect x="16.16" y="93.56" width="4.04" height="1.4" fill="#ce9178"/><rect x="21.21" y="93.56" width="5.05" height="1.4" fill="#ce9178"/><rect x="27.27" y="93.56" width="7.07" height="1.4" fill="#ce9178"/><rect x="16.16" y="95.54" width="4.04" height="1.4" fill="#ce9178"/><rect x="21.21" y="95.54" width="7.07" height="1.4" fill="#ce9178"/><rect x="29.29" y="95.54" width="2.02" height="1.4" fill="#ce9178"/><rect x="32.32" y="95.54" width="9.09" height="1.4" fill="#ce9178"/><rect x="42.42" y="95.54" width="5.05" height="1.4" fill="#ce9178"/><rect x="48.48" y="95.54" width="7.07" height="1.4" fill="#ce9178"/><rect x="56.56" y="95.54" width="12.12" height="1.4" fill="#ce9178"/><rect x="69.69" y="95.54" width="4.04" height="1.4" fill="#ce9178"/><rect x="74.74" y="95.54" width="3.03" height="1.4" fill="#ce9178"/><rect x="78.78" y="95.54" width="8.08" height="1.4" fill="#ce9178"/><rect x="87.87" y="95.54" width="8.08" height="1.4" fill="#ce9178"/><rect x="96.96" y="95.54" width="3.03" height="1.4" fill="#ce9178"/><rect x="101.00" y="95.54" width="8.08" height="1.4" fill="#ce9178"/><rect x="110.09" y="95.54" width="0.91" height="1.4" fill="#ce9178"/><rect x="16.16" y="97.52" width="4.04" height="1.4" fill="#ce9178"/><rect x="21.21" y="97.52" width="7.07" height="1.4" fill="#ce9178"/><rect x="29.29" y="97.52" width="8.08" height="1.4" fill="#ce9178"/><rect x="38.38" y="97.52" width="2.02" height="1.4" fill="#ce9178"/><rect x="41.41" y="97.52" width="5.05" height="1.4" fill="#ce9178"/><rect x="47.47" y="97.52" width="3.03" height="1.4" fill="#ce9178"/><rect x="51.51" y="97.52" width="3.03" height="1.4" fill="#ce9178"/><rect x="55.55" y="97.52" width="6.06" height="1.4" fill="#ce9178"/><rect x="62.62" y="97.52" width="2.02" height="1.4" fill="#ce9178"/><rect x="65.65" y="97.52" width="7.07" height="1.4" fill="#ce9178"/><rect x="73.73" y="97.52" width="3.03" height="1.4" fill="#ce9178"/><rect x="77.77" y="97.52" width="8.08" height="1.4" fill="#ce9178"/><rect x="86.86" y="97.52" width="4.04" height="1.4" fill="#ce9178"/><rect x="91.91" y="97.52" width="6.06" height="1.4" fill="#ce9178"/><rect x="98.98" y="97.52" width="11.11" height="1.4" fill="#ce9178"/><rect x="16.16" y="99.50" width="1.01" height="1.4" fill="#ce9178"/><rect x="18.18" y="99.50" width="3.03" height="1.4" fill="#ce9178"/><rect x="22.22" y="99.50" width="9.09" height="1.4" fill="#ce9178"/><rect x="32.32" y="99.50" width="10.10" height="1.4" fill="#ce9178"/><rect x="43.43" y="99.50" width="2.02" height="1.4" fill="#ce9178"/><rect x="46.46" y="99.50" width="4.04" height="1.4" fill="#ce9178"/><rect x="51.51" y="99.50" width="6.06" height="1.4" fill="#ce9178"/><rect x="58.58" y="99.50" width="2.02" height="1.4" fill="#ce9178"/><rect x="61.61" y="99.50" width="7.07" height="1.4" fill="#ce9178"/><rect x="69.69" y="99.50" width="5.05" height="1.4" fill="#ce9178"/><rect x="75.75" y="99.50" width="3.03" height="1.4" fill="#ce9178"/><rect x="79.79" y="99.50" width="10.10" height="1.4" fill="#ce9178"/><rect x="90.90" y="99.50" width="9.09" height="1.4" fill="#ce9178"/><rect x="16.16" y="101.48" width="4.04" height="1.4" fill="#ce9178"/><rect x="21.21" y="101.48" width="7.07" height="1.4" fill="#ce9178"/><rect x="16.16" y="103.46" width="2.02" height="1.4" fill="#ce9178"/><rect x="19.19" y="103.46" width="5.05" height="1.4" fill="#ce9178"/><rect x="25.25" y="103.46" width="6.06" height="1.4" fill="#ce9178"/><rect x="32.32" y="103.46" width="7.07" height="1.4" fill="#ce9178"/><rect x="16.16" y="105.44" width="2.02" height="1.4" fill="#ce9178"/><rect x="19.19" y="105.44" width="4.04" height="1.4" fill="#ce9178"/><rect x="24.24" y="105.44" width="3.03" height="1.4" fill="#ce9178"/><rect x="28.28" y="105.44" width="7.07" height="1.4" fill="#ce9178"/><rect x="16.16" y="107.42" width="2.02" height="1.4" fill="#ce9178"/><rect x="19.19" y="107.42" width="10.10" height="1.4" fill="#ce9178"/><rect x="30.30" y="107.42" width="6.06" height="1.4" fill="#ce9178"/><rect x="37.37" y="107.42" width="7.07" height="1.4" fill="#ce9178"/><rect x="16.16" y="109.40" width="3.03" height="1.4" fill="#ce9178"/><rect x="19.19" y="109.40" width="1.01" height="1.4" fill="#ffd700"/><rect x="0.00" y="113.36" width="4.04" height="1.4" fill="#c586c0"/><rect x="5.05" y="113.36" width="8.08" height="1.4" fill="#9cdcfe"/><rect x="14.14" y="113.36" width="2.02" height="1.4" fill="#d4d4d4"/><rect x="17.17" y="113.36" width="8.08" height="1.4" fill="#ce9178"/><rect x="26.26" y="113.36" width="12.12" height="1.4" fill="#ce9178"/><rect x="38.38" y="113.36" width="1.01" height="1.4" fill="#d4d4d4"/><rect x="4.04" y="115.34" width="2.02" height="1.4" fill="#4ec9b0"/><rect x="6.06" y="115.34" width="1.01" height="1.4" fill="#d4d4d4"/><rect x="7.07" y="115.34" width="6.06" height="1.4" fill="#9cdcfe"/><rect x="13.13" y="115.34" width="1.01" height="1.4" fill="#ffd700"/><rect x="14.14" y="115.34" width="8.08" height="1.4" fill="#ce9178"/><rect x="23.23" y="115.34" width="12.12" height="1.4" fill="#ce9178"/><rect x="35.35" y="115.34" width="1.01" height="1.4" fill="#ffd700"/><rect x="4.04" y="117.32" width="10.10" height="1.4" fill="#9cdcfe"/><rect x="15.15" y="117.32" width="1.01" height="1.4" fill="#d4d4d4"/><rect x="17.17" y="117.32" width="2.02" height="1.4" fill="#4ec9b0"/><rect x="19.19" y="117.32" width="1.01" height="1.4" fill="#d4d4d4"/><rect x="20.20" y="117.32" width="13.13" height="1.4" fill="#9cdcfe"/><rect x="33.33" y="117.32" width="1.01" height="1.4" fill="#ffd700"/><rect x="34.34" y="117.32" width="7.07" height="1.4" fill="#ce9178"/><rect x="42.42" y="117.32" width="2.02" height="1.4" fill="#ce9178"/><rect x="45.45" y="117.32" width="7.07" height="1.4" fill="#ce9178"/><rect x="52.52" y="117.32" width="1.01" height="1.4" fill="#ffd700"/><rect x="4.04" y="119.30" width="1.01" height="1.4" fill="#6a9955"/><rect x="6.06" y="119.30" width="2.02" height="1.4" fill="#6a9955"/><rect x="9.09" y="119.30" width="15.15" height="1.4" fill="#6a9955"/><rect x="25.25" y="119.30" width="8.08" height="1.4" fill="#6a9955"/><rect x="4.04" y="121.28" width="1.01" height="1.4" fill="#6a9955"/><rect x="10.10" y="121.28" width="20.20" height="1.4" fill="#6a9955"/><rect x="31.31" y="121.28" width="8.08" height="1.4" fill="#6a9955"/><rect x="40.40" y="121.28" width="22.22" height="1.4" fill="#6a9955"/><rect x="63.63" y="121.28" width="17.17" height="1.4" fill="#6a9955"/><rect x="81.81" y="121.28" width="7.07" height="1.4" fill="#6a9955"/><rect x="4.04" y="123.26" width="2.02" height="1.4" fill="#c586c0"/><rect x="7.07" y="123.26" width="10.10" height="1.4" fill="#9cdcfe"/><rect x="18.18" y="123.26" width="2.02" height="1.4" fill="#569cd6"/><rect x="21.21" y="123.26" width="3.03" height="1.4" fill="#569cd6"/><rect x="25.25" y="123.26" width="4.04" height="1.4" fill="#569cd6"/><rect x="29.29" y="123.26" width="1.01" height="1.4" fill="#d4d4d4"/><rect x="8.08" y="125.24" width="2.02" height="1.4" fill="#4ec9b0"/><rect x="10.10" y="125.24" width="1.01" height="1.4" fill="#d4d4d4"/><rect x="11.11" y="125.24" width="5.05" height="1.4" fill="#9cdcfe"/><rect x="16.16" y="125.24" width="1.01" height="1.4" fill="#ffd700"/><rect x="17.17" y="125.24" width="10.10" height="1.4" fill="#9cdcfe"/><rect x="27.27" y="125.24" width="1.01" height="1.4" fill="#d4d4d4"/><rect x="29.29" y="125.24" width="5.05" height="1.4" fill="#9cdcfe"/><rect x="34.34" y="125.24" width="3.03" height="1.4" fill="#d4d4d4"/><rect x="38.38" y="125.24" width="16.16" height="1.4" fill="#9cdcfe"/><rect x="54.54" y="125.24" width="1.01" height="1.4" fill="#d4d4d4"/><rect x="55.55" y="125.24" width="4.04" height="1.4" fill="#569cd6"/><rect x="59.59" y="125.24" width="1.01" height="1.4" fill="#d4d4d4"/><rect x="61.61" y="125.24" width="7.07" height="1.4" fill="#9cdcfe"/><rect x="68.68" y="125.24" width="1.01" height="1.4" fill="#d4d4d4"/><rect x="69.69" y="125.24" width="9.09" height="1.4" fill="#ce9178"/><rect x="79.79" y="125.24" width="6.06" height="1.4" fill="#ce9178"/><rect x="85.85" y="125.24" width="1.01" height="1.4" fill="#ffd700"/><rect x="4.04" y="129.20" width="2.02" height="1.4" fill="#c586c0"/><rect x="7.07" y="129.20" width="2.02" height="1.4" fill="#4ec9b0"/><rect x="9.09" y="129.20" width="1.01" height="1.4" fill="#d4d4d4"/><rect x="10.10" y="129.20" width="6.06" height="1.4" fill="#9cdcfe"/><rect x="16.16" y="129.20" width="1.01" height="1.4" fill="#ffd700"/><rect x="17.17" y="129.20" width="9.09" height="1.4" fill="#ce9178"/><rect x="26.26" y="129.20" width="1.01" height="1.4" fill="#ffd700"/><rect x="27.27" y="129.20" width="1.01" height="1.4" fill="#d4d4d4"/><rect x="8.08" y="131.18" width="2.02" height="1.4" fill="#4ec9b0"/><rect x="10.10" y="131.18" width="1.01" height="1.4" fill="#d4d4d4"/><rect x="11.11" y="131.18" width="4.04" height="1.4" fill="#9cdcfe"/><rect x="15.15" y="131.18" width="2.02" height="1.4" fill="#ffd700"/><rect x="8.08" y="133.16" width="2.02" height="1.4" fill="#4ec9b0"/><rect x="10.10" y="133.16" width="1.01" height="1.4" fill="#d4d4d4"/><rect x="11.11" y="133.16" width="5.05" height="1.4" fill="#9cdcfe"/><rect x="16.16" y="133.16" width="1.01" height="1.4" fill="#ffd700"/><rect x="17.17" y="133.16" width="4.04" height="1.4" fill="#ce9178"/><rect x="22.22" y="133.16" width="11.11" height="1.4" fill="#ce9178"/><rect x="33.33" y="133.16" width="1.01" height="1.4" fill="#ffd700"/><rect x="8.08" y="135.14" width="12.12" height="1.4" fill="#9cdcfe"/><rect x="21.21" y="135.14" width="1.01" height="1.4" fill="#d4d4d4"/><rect x="23.23" y="135.14" width="16.16" height="1.4" fill="#9cdcfe"/><rect x="39.39" y="135.14" width="1.01" height="1.4" fill="#ffd700"/><rect x="40.40" y="135.14" width="10.10" height="1.4" fill="#9cdcfe"/><rect x="50.50" y="135.14" width="1.01" height="1.4" fill="#ffd700"/><rect x="8.08" y="137.12" width="8.08" height="1.4" fill="#6a9955"/><rect x="17.17" y="137.12" width="6.06" height="1.4" fill="#6a9955"/><rect x="8.08" y="139.10" width="10.10" height="1.4" fill="#9cdcfe"/><rect x="19.19" y="139.10" width="1.01" height="1.4" fill="#d4d4d4"/><rect x="21.21" y="139.10" width="1.01" height="1.4" fill="#ffd700"/><rect x="22.22" y="139.10" width="20.20" height="1.4" fill="#ce9178"/><rect x="42.42" y="139.10" width="1.01" height="1.4" fill="#d4d4d4"/><rect x="44.44" y="139.10" width="19.19" height="1.4" fill="#ce9178"/><rect x="63.63" y="139.10" width="1.01" height="1.4" fill="#d4d4d4"/><rect x="65.65" y="139.10" width="26.26" height="1.4" fill="#ce9178"/><rect x="91.91" y="139.10" width="1.01" height="1.4" fill="#d4d4d4"/><rect x="93.93" y="139.10" width="17.07" height="1.4" fill="#ce9178"/><rect x="20.20" y="141.08" width="21.21" height="1.4" fill="#ce9178"/><rect x="41.41" y="141.08" width="1.01" height="1.4" fill="#d4d4d4"/><rect x="43.43" y="141.08" width="42.42" height="1.4" fill="#ce9178"/><rect x="85.85" y="141.08" width="1.01" height="1.4" fill="#d4d4d4"/><rect x="87.87" y="141.08" width="23.13" height="1.4" fill="#ce9178"/><rect x="20.20" y="143.06" width="36.36" height="1.4" fill="#ce9178"/><rect x="57.57" y="143.06" width="15.15" height="1.4" fill="#ce9178"/><rect x="72.72" y="143.06" width="1.01" height="1.4" fill="#d4d4d4"/><rect x="74.74" y="143.06" width="29.29" height="1.4" fill="#ce9178"/><rect x="104.03" y="143.06" width="1.01" height="1.4" fill="#d4d4d4"/><rect x="106.05" y="143.06" width="4.95" height="1.4" fill="#ce9178"/><rect x="20.20" y="145.04" width="19.19" height="1.4" fill="#ce9178"/><rect x="39.39" y="145.04" width="1.01" height="1.4" fill="#d4d4d4"/><rect x="41.41" y="145.04" width="30.30" height="1.4" fill="#ce9178"/><rect x="71.71" y="145.04" width="1.01" height="1.4" fill="#d4d4d4"/><rect x="73.73" y="145.04" width="37.27" height="1.4" fill="#ce9178"/><rect x="20.20" y="147.02" width="22.22" height="1.4" fill="#ce9178"/><rect x="42.42" y="147.02" width="1.01" height="1.4" fill="#d4d4d4"/><rect x="44.44" y="147.02" width="40.40" height="1.4" fill="#ce9178"/><rect x="84.84" y="147.02" width="1.01" height="1.4" fill="#d4d4d4"/><rect x="86.86" y="147.02" width="24.14" height="1.4" fill="#ce9178"/><rect x="8.08" y="149.00" width="2.02" height="1.4" fill="#4ec9b0"/><rect x="10.10" y="149.00" width="1.01" height="1.4" fill="#d4d4d4"/><rect x="11.11" y="149.00" width="7.07" height="1.4" fill="#9cdcfe"/><rect x="18.18" y="149.00" width="1.01" height="1.4" fill="#ffd700"/><rect x="19.19" y="149.00" width="6.06" height="1.4" fill="#ce9178"/><rect x="26.26" y="149.00" width="2.02" height="1.4" fill="#ce9178"/><rect x="29.29" y="149.00" width="10.10" height="1.4" fill="#ce9178"/><rect x="40.40" y="149.00" width="4.04" height="1.4" fill="#ce9178"/><rect x="45.45" y="149.00" width="1.01" height="1.4" fill="#ce9178"/><rect x="47.47" y="149.00" width="3.03" height="1.4" fill="#ce9178"/><rect x="50.50" y="149.00" width="1.01" height="1.4" fill="#d4d4d4"/><rect x="51.51" y="149.00" width="6.06" height="1.4" fill="#9cdcfe"/><rect x="57.57" y="149.00" width="1.01" height="1.4" fill="#ffd700"/><rect x="58.58" y="149.00" width="10.10" height="1.4" fill="#9cdcfe"/><rect x="68.68" y="149.00" width="1.01" height="1.4" fill="#ffd700"/><rect x="69.69" y="149.00" width="12.12" height="1.4" fill="#9cdcfe"/><rect x="81.81" y="149.00" width="3.03" height="1.4" fill="#ffd700"/></svg><div class="r" style="left:1903px;top:115px;width:1px;height:496px;background:#010409;"></div><div class="r" style="left:1904px;top:115.5px;width:15px;height:1.6px;background:#a0a0a0;"></div>
</body></html>
